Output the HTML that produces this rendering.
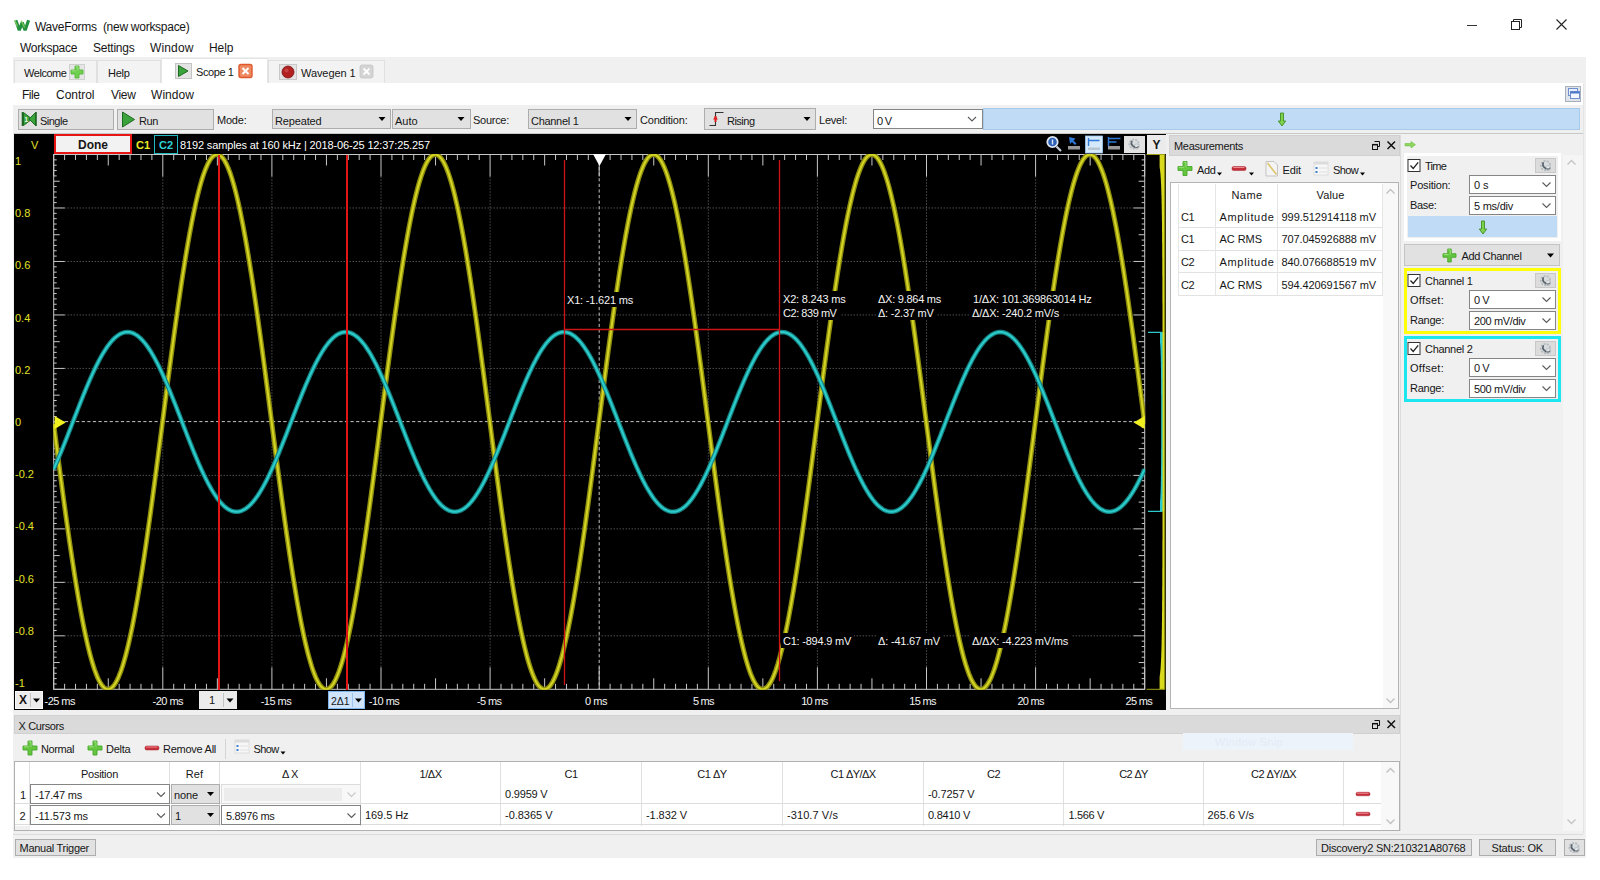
<!DOCTYPE html><html><head><meta charset="utf-8"><title>WaveForms (new workspace)</title><style>
html,body{margin:0;padding:0;}
body{width:1600px;height:880px;background:#fff;position:relative;overflow:hidden;font-family:"Liberation Sans",sans-serif;font-size:11px;color:#161616;}
.a{position:absolute;box-sizing:border-box;}
.t{position:absolute;white-space:nowrap;line-height:14px;height:14px;}
.t12{font-size:12px;}
.btn{position:absolute;box-sizing:border-box;background:#e1e1e1;border:1px solid #adadad;}
.cmb{position:absolute;box-sizing:border-box;background:#e1e1e1;border:1px solid #adadad;}
.edit{position:absolute;box-sizing:border-box;background:#fff;border:1px solid #858585;}
.w{color:#fff;}
svg{position:absolute;left:0;top:0;overflow:visible;}
</style></head><body>
<div class="t" style="left:35px;top:20px;font-size:12px;letter-spacing:-0.273px;">WaveForms&nbsp; (new workspace)</div>
<div class="t" style="left:20px;top:41px;font-size:12px;letter-spacing:-0.312px;">Workspace</div>
<div class="t" style="left:93px;top:41px;font-size:12px;letter-spacing:-0.232px;">Settings</div>
<div class="t" style="left:150px;top:41px;font-size:12px;letter-spacing:0.135px;">Window</div>
<div class="t" style="left:209px;top:41px;font-size:12px;letter-spacing:-0.047px;">Help</div>
<div class="a" style="left:13px;top:57px;width:1573px;height:801px;background:#f0f0f0;"></div>
<div class="a" style="left:14px;top:60px;width:83px;height:23px;background:#f3f3f3;border:1px solid #e0e0e0;border-bottom:none;"></div>
<div class="a" style="left:97px;top:60px;width:64px;height:23px;background:#f3f3f3;border:1px solid #e0e0e0;border-bottom:none;"></div>
<div class="a" style="left:161px;top:58px;width:107px;height:26px;background:#fff;border:1px solid #e4e4e4;border-bottom:none;"></div>
<div class="a" style="left:268px;top:60px;width:117px;height:23px;background:#f3f3f3;border:1px solid #e0e0e0;border-bottom:none;"></div>
<div class="t" style="left:24px;top:66px;letter-spacing:-0.451px;">Welcome</div>
<div class="t" style="left:108px;top:66px;letter-spacing:-0.281px;">Help</div>
<div class="t" style="left:196px;top:65px;letter-spacing:-0.411px;">Scope 1</div>
<div class="t" style="left:301px;top:66px;letter-spacing:-0.083px;">Wavegen 1</div>
<div class="a" style="left:69px;top:64px;width:16px;height:16px;background:#e6e6e6;border:1px solid #d0d0d0;"></div>
<div class="a" style="left:175px;top:63px;width:17px;height:16px;background:#e4e4e4;border:1px solid #c4c4c4;"></div>
<div class="a" style="left:279px;top:64px;width:18px;height:16px;background:#e4e4e4;border:1px solid #c8c8c8;"></div>
<div class="a" style="left:13px;top:83px;width:1570px;height:22px;background:#fff;"></div>
<div class="t" style="left:22px;top:88px;font-size:12px;letter-spacing:-0.461px;">File</div>
<div class="t" style="left:56px;top:88px;font-size:12px;letter-spacing:-0.027px;">Control</div>
<div class="t" style="left:111px;top:88px;font-size:12px;letter-spacing:-0.324px;">View</div>
<div class="t" style="left:151px;top:88px;font-size:12px;letter-spacing:0.052px;">Window</div>
<div class="a" style="left:1565px;top:86px;width:16px;height:16px;background:#dfe3ea;border:1px solid #a8b0bd;"></div>
<div class="btn" style="left:18px;top:109px;width:96px;height:21px;"></div>
<div class="btn" style="left:117px;top:109px;width:97px;height:21px;"></div>
<div class="t" style="left:40px;top:114px;letter-spacing:-0.513px;">Single</div>
<div class="t" style="left:139px;top:114px;letter-spacing:-0.396px;">Run</div>
<div class="t" style="left:217px;top:113px;letter-spacing:-0.216px;">Mode:</div>
<div class="cmb" style="left:272px;top:109px;width:119px;height:20px;"></div>
<div class="t" style="left:275px;top:114px;letter-spacing:-0.152px;">Repeated</div>
<div class="cmb" style="left:392px;top:109px;width:79px;height:20px;"></div>
<div class="t" style="left:395px;top:114px;letter-spacing:-0.035px;">Auto</div>
<div class="t" style="left:473px;top:113px;letter-spacing:-0.275px;">Source:</div>
<div class="cmb" style="left:528px;top:109px;width:109px;height:20px;"></div>
<div class="t" style="left:531px;top:114px;letter-spacing:-0.295px;">Channel 1</div>
<div class="t" style="left:640px;top:113px;letter-spacing:-0.205px;">Condition:</div>
<div class="cmb" style="left:704px;top:108px;width:112px;height:22px;"></div>
<div class="t" style="left:727px;top:114px;letter-spacing:-0.513px;">Rising</div>
<div class="t" style="left:819px;top:113px;letter-spacing:-0.227px;">Level:</div>
<div class="edit" style="left:873px;top:109px;width:110px;height:20px;"></div>
<div class="t" style="left:877px;top:114px;letter-spacing:-0.672px;">0 V</div>
<div class="a" style="left:983px;top:108px;width:597px;height:22px;background:#bfdbf5;border:1px solid #a9c9ea;"></div>
<div class="a" style="left:14px;top:133px;width:1569px;height:1px;background:#c8c8c8;"></div>
<div class="a" style="left:14px;top:134px;width:1152px;height:576px;background:#000;"></div>
<svg width="1600" height="880" viewBox="0 0 1600 880"><path d="M15.800 20.300L19.300 30.300L22.200 22.600L25.100 30.300L28.600 20.300" fill="none" stroke="#23903f" stroke-width="3.200" stroke-linejoin="miter" stroke-miterlimit="2.500"/><path d="M21.200 20.600L24.600 27.600M14.800 20.300L17.500 26.500" fill="none" stroke="#86cc5a" stroke-width="1.300" opacity="0.9"/><path d="M1467 25.5h10" stroke="#333" stroke-width="1"/><path d="M1513.5 21.5v-2h8v8h-2" fill="none" stroke="#222" stroke-width="1"/><rect x="1511.5" y="21.5" width="8" height="8" fill="none" stroke="#222" stroke-width="1"/><path d="M1556.5 19.5l10 10M1566.5 19.5l-10 10" stroke="#222" stroke-width="1.1"/><path d="M75.0 66h4v4.0h4.0v4h-4.0v4.0h-4v-4.0h-4.0v-4h4.0z" fill="#6fcf4f" stroke="#58b83c" stroke-width="0.9" stroke-linejoin="round"/><path d="M75.6 66.8h2.4v4.0M71.8 70.8h4.0" fill="none" stroke="#a8e88c" stroke-width="1" opacity="0.8"/><path d="M178.5 65.5l9.5 5.5l-9.5 5.5z" fill="#3ba33b" stroke="#1f6a22" stroke-width="1" stroke-linejoin="round"/><rect x="239" y="64.500" width="13" height="13" rx="2" fill="#ee8a62" stroke="#e0592e" stroke-width="1.4"/><path d="M242.500 68l6 6M248.500 68l-6 6" stroke="#fff" stroke-width="1.900"/><circle cx="288" cy="72" r="6" fill="#b32020" stroke="#7a1212" stroke-width="0.8"/><circle cx="286.5" cy="70.500" r="2" fill="#d25a5a" opacity="0.6"/><rect x="360" y="65" width="13" height="13" rx="2" fill="#d4d4d4" stroke="#c4c4c4" stroke-width="0.8"/><path d="M363.500 68.500l6 6M369.500 68.500l-6 6" stroke="#fff" stroke-width="1.8"/><rect x="1568.500" y="88.500" width="9" height="7" fill="#e8eefb" stroke="#6f8fd0"/><rect x="1570.500" y="91.500" width="9" height="7" fill="#f4f7ff" stroke="#6f8fd0"/><path d="M1570.500 92.500h9" stroke="#4f78c8" stroke-width="2"/><path d="M23.500 112.500l8.500 6.500l-8.500 6.500z" fill="#3ba33b" stroke="#1f6a22" stroke-width="1" stroke-linejoin="round"/><path d="M35.500 112.500l-6.500 6.500l6.500 6.500z" fill="#3ba33b" stroke="#1f6a22" stroke-width="1" stroke-linejoin="round"/><path d="M22.500 112v14M36 112v14" stroke="#1f6a22" stroke-width="1.6"/><text x="24.300" y="122" font-family="Liberation Sans, sans-serif" font-size="7" font-weight="bold" fill="#e4f4e4">1</text><path d="M122.500 112l12 7.500l-12 7.500z" fill="#3ba33b" stroke="#1f6a22" stroke-width="1" stroke-linejoin="round"/><path d="M378.5 117.0L385.5 117.0L382 121.0Z" fill="#000"/><path d="M457.5 117.0L464.5 117.0L461 121.0Z" fill="#000"/><path d="M624.5 117.0L631.5 117.0L628 121.0Z" fill="#000"/><path d="M803.5 117.0L810.5 117.0L807 121.0Z" fill="#000"/><path d="M709.500 125.500h6v-13h8" fill="none" stroke="#333" stroke-width="1.1"/><path d="M715.500 122v-6" stroke="#e02020" stroke-width="2"/><path d="M713 119.500l2.500-3.500l2.500 3.500z" fill="#e02020"/><path d="M968 117L972 121L976 117" fill="none" stroke="#5c5c5c" stroke-width="1.1"/><path d="M1280.5 113.0h3v8h2.2l-3.7 5l-3.7-5h2.2z" fill="#7fd04a" stroke="#3e8f25" stroke-width="0.9" stroke-linejoin="round"/></svg>
<svg width="1600" height="880" viewBox="0 0 1600 880"><path d="M162.80 176.5V667.3M271.90 176.5V667.3M381.00 176.5V667.3M490.10 176.5V667.3M708.30 176.5V667.3M817.40 176.5V667.3M926.50 176.5V667.3M1035.60 176.5V667.3M64.7 207.98H1133.7M64.7 261.46H1133.7M64.7 314.94H1133.7M64.7 368.42H1133.7M64.7 475.38H1133.7M64.7 528.86H1133.7M64.7 582.34H1133.7M64.7 635.82H1133.7" stroke="#767676" stroke-width="1" stroke-dasharray="1 2" fill="none"/><path d="M53.70 154.5v22M53.70 689.3v-22M64.61 154.5v5.5M64.61 689.3v-5.5M75.52 154.5v5.5M75.52 689.3v-5.5M86.43 154.5v5.5M86.43 689.3v-5.5M97.34 154.5v5.5M97.34 689.3v-5.5M108.25 154.5v11M108.25 689.3v-11M119.16 154.5v5.5M119.16 689.3v-5.5M130.07 154.5v5.5M130.07 689.3v-5.5M140.98 154.5v5.5M140.98 689.3v-5.5M151.89 154.5v5.5M151.89 689.3v-5.5M162.80 154.5v22M162.80 689.3v-22M173.71 154.5v5.5M173.71 689.3v-5.5M184.62 154.5v5.5M184.62 689.3v-5.5M195.53 154.5v5.5M195.53 689.3v-5.5M206.44 154.5v5.5M206.44 689.3v-5.5M217.35 154.5v11M217.35 689.3v-11M228.26 154.5v5.5M228.26 689.3v-5.5M239.17 154.5v5.5M239.17 689.3v-5.5M250.08 154.5v5.5M250.08 689.3v-5.5M260.99 154.5v5.5M260.99 689.3v-5.5M271.90 154.5v22M271.90 689.3v-22M282.81 154.5v5.5M282.81 689.3v-5.5M293.72 154.5v5.5M293.72 689.3v-5.5M304.63 154.5v5.5M304.63 689.3v-5.5M315.54 154.5v5.5M315.54 689.3v-5.5M326.45 154.5v11M326.45 689.3v-11M337.36 154.5v5.5M337.36 689.3v-5.5M348.27 154.5v5.5M348.27 689.3v-5.5M359.18 154.5v5.5M359.18 689.3v-5.5M370.09 154.5v5.5M370.09 689.3v-5.5M381.00 154.5v22M381.00 689.3v-22M391.91 154.5v5.5M391.91 689.3v-5.5M402.82 154.5v5.5M402.82 689.3v-5.5M413.73 154.5v5.5M413.73 689.3v-5.5M424.64 154.5v5.5M424.64 689.3v-5.5M435.55 154.5v11M435.55 689.3v-11M446.46 154.5v5.5M446.46 689.3v-5.5M457.37 154.5v5.5M457.37 689.3v-5.5M468.28 154.5v5.5M468.28 689.3v-5.5M479.19 154.5v5.5M479.19 689.3v-5.5M490.10 154.5v22M490.10 689.3v-22M501.01 154.5v5.5M501.01 689.3v-5.5M511.92 154.5v5.5M511.92 689.3v-5.5M522.83 154.5v5.5M522.83 689.3v-5.5M533.74 154.5v5.5M533.74 689.3v-5.5M544.65 154.5v11M544.65 689.3v-11M555.56 154.5v5.5M555.56 689.3v-5.5M566.47 154.5v5.5M566.47 689.3v-5.5M577.38 154.5v5.5M577.38 689.3v-5.5M588.29 154.5v5.5M588.29 689.3v-5.5M599.20 154.5v22M599.20 689.3v-22M610.11 154.5v5.5M610.11 689.3v-5.5M621.02 154.5v5.5M621.02 689.3v-5.5M631.93 154.5v5.5M631.93 689.3v-5.5M642.84 154.5v5.5M642.84 689.3v-5.5M653.75 154.5v11M653.75 689.3v-11M664.66 154.5v5.5M664.66 689.3v-5.5M675.57 154.5v5.5M675.57 689.3v-5.5M686.48 154.5v5.5M686.48 689.3v-5.5M697.39 154.5v5.5M697.39 689.3v-5.5M708.30 154.5v22M708.30 689.3v-22M719.21 154.5v5.5M719.21 689.3v-5.5M730.12 154.5v5.5M730.12 689.3v-5.5M741.03 154.5v5.5M741.03 689.3v-5.5M751.94 154.5v5.5M751.94 689.3v-5.5M762.85 154.5v11M762.85 689.3v-11M773.76 154.5v5.5M773.76 689.3v-5.5M784.67 154.5v5.5M784.67 689.3v-5.5M795.58 154.5v5.5M795.58 689.3v-5.5M806.49 154.5v5.5M806.49 689.3v-5.5M817.40 154.5v22M817.40 689.3v-22M828.31 154.5v5.5M828.31 689.3v-5.5M839.22 154.5v5.5M839.22 689.3v-5.5M850.13 154.5v5.5M850.13 689.3v-5.5M861.04 154.5v5.5M861.04 689.3v-5.5M871.95 154.5v11M871.95 689.3v-11M882.86 154.5v5.5M882.86 689.3v-5.5M893.77 154.5v5.5M893.77 689.3v-5.5M904.68 154.5v5.5M904.68 689.3v-5.5M915.59 154.5v5.5M915.59 689.3v-5.5M926.50 154.5v22M926.50 689.3v-22M937.41 154.5v5.5M937.41 689.3v-5.5M948.32 154.5v5.5M948.32 689.3v-5.5M959.23 154.5v5.5M959.23 689.3v-5.5M970.14 154.5v5.5M970.14 689.3v-5.5M981.05 154.5v11M981.05 689.3v-11M991.96 154.5v5.5M991.96 689.3v-5.5M1002.87 154.5v5.5M1002.87 689.3v-5.5M1013.78 154.5v5.5M1013.78 689.3v-5.5M1024.69 154.5v5.5M1024.69 689.3v-5.5M1035.60 154.5v22M1035.60 689.3v-22M1046.51 154.5v5.5M1046.51 689.3v-5.5M1057.42 154.5v5.5M1057.42 689.3v-5.5M1068.33 154.5v5.5M1068.33 689.3v-5.5M1079.24 154.5v5.5M1079.24 689.3v-5.5M1090.15 154.5v11M1090.15 689.3v-11M1101.06 154.5v5.5M1101.06 689.3v-5.5M1111.97 154.5v5.5M1111.97 689.3v-5.5M1122.88 154.5v5.5M1122.88 689.3v-5.5M1133.79 154.5v5.5M1133.79 689.3v-5.5M1144.70 154.5v22M1144.70 689.3v-22M53.7 154.50h11M1144.7 154.50h-11M53.7 159.85h3M1144.7 159.85h-3M53.7 165.20h3M1144.7 165.20h-3M53.7 170.54h3M1144.7 170.54h-3M53.7 175.89h3M1144.7 175.89h-3M53.7 181.24h6M1144.7 181.24h-6M53.7 186.59h3M1144.7 186.59h-3M53.7 191.94h3M1144.7 191.94h-3M53.7 197.28h3M1144.7 197.28h-3M53.7 202.63h3M1144.7 202.63h-3M53.7 207.98h11M1144.7 207.98h-11M53.7 213.33h3M1144.7 213.33h-3M53.7 218.68h3M1144.7 218.68h-3M53.7 224.02h3M1144.7 224.02h-3M53.7 229.37h3M1144.7 229.37h-3M53.7 234.72h6M1144.7 234.72h-6M53.7 240.07h3M1144.7 240.07h-3M53.7 245.42h3M1144.7 245.42h-3M53.7 250.76h3M1144.7 250.76h-3M53.7 256.11h3M1144.7 256.11h-3M53.7 261.46h11M1144.7 261.46h-11M53.7 266.81h3M1144.7 266.81h-3M53.7 272.16h3M1144.7 272.16h-3M53.7 277.50h3M1144.7 277.50h-3M53.7 282.85h3M1144.7 282.85h-3M53.7 288.20h6M1144.7 288.20h-6M53.7 293.55h3M1144.7 293.55h-3M53.7 298.90h3M1144.7 298.90h-3M53.7 304.24h3M1144.7 304.24h-3M53.7 309.59h3M1144.7 309.59h-3M53.7 314.94h11M1144.7 314.94h-11M53.7 320.29h3M1144.7 320.29h-3M53.7 325.64h3M1144.7 325.64h-3M53.7 330.98h3M1144.7 330.98h-3M53.7 336.33h3M1144.7 336.33h-3M53.7 341.68h6M1144.7 341.68h-6M53.7 347.03h3M1144.7 347.03h-3M53.7 352.38h3M1144.7 352.38h-3M53.7 357.72h3M1144.7 357.72h-3M53.7 363.07h3M1144.7 363.07h-3M53.7 368.42h11M1144.7 368.42h-11M53.7 373.77h3M1144.7 373.77h-3M53.7 379.12h3M1144.7 379.12h-3M53.7 384.46h3M1144.7 384.46h-3M53.7 389.81h3M1144.7 389.81h-3M53.7 395.16h6M1144.7 395.16h-6M53.7 400.51h3M1144.7 400.51h-3M53.7 405.86h3M1144.7 405.86h-3M53.7 411.20h3M1144.7 411.20h-3M53.7 416.55h3M1144.7 416.55h-3M53.7 421.90h11M1144.7 421.90h-11M53.7 427.25h3M1144.7 427.25h-3M53.7 432.60h3M1144.7 432.60h-3M53.7 437.94h3M1144.7 437.94h-3M53.7 443.29h3M1144.7 443.29h-3M53.7 448.64h6M1144.7 448.64h-6M53.7 453.99h3M1144.7 453.99h-3M53.7 459.34h3M1144.7 459.34h-3M53.7 464.68h3M1144.7 464.68h-3M53.7 470.03h3M1144.7 470.03h-3M53.7 475.38h11M1144.7 475.38h-11M53.7 480.73h3M1144.7 480.73h-3M53.7 486.08h3M1144.7 486.08h-3M53.7 491.42h3M1144.7 491.42h-3M53.7 496.77h3M1144.7 496.77h-3M53.7 502.12h6M1144.7 502.12h-6M53.7 507.47h3M1144.7 507.47h-3M53.7 512.82h3M1144.7 512.82h-3M53.7 518.16h3M1144.7 518.16h-3M53.7 523.51h3M1144.7 523.51h-3M53.7 528.86h11M1144.7 528.86h-11M53.7 534.21h3M1144.7 534.21h-3M53.7 539.56h3M1144.7 539.56h-3M53.7 544.90h3M1144.7 544.90h-3M53.7 550.25h3M1144.7 550.25h-3M53.7 555.60h6M1144.7 555.60h-6M53.7 560.95h3M1144.7 560.95h-3M53.7 566.30h3M1144.7 566.30h-3M53.7 571.64h3M1144.7 571.64h-3M53.7 576.99h3M1144.7 576.99h-3M53.7 582.34h11M1144.7 582.34h-11M53.7 587.69h3M1144.7 587.69h-3M53.7 593.04h3M1144.7 593.04h-3M53.7 598.38h3M1144.7 598.38h-3M53.7 603.73h3M1144.7 603.73h-3M53.7 609.08h6M1144.7 609.08h-6M53.7 614.43h3M1144.7 614.43h-3M53.7 619.78h3M1144.7 619.78h-3M53.7 625.12h3M1144.7 625.12h-3M53.7 630.47h3M1144.7 630.47h-3M53.7 635.82h11M1144.7 635.82h-11M53.7 641.17h3M1144.7 641.17h-3M53.7 646.52h3M1144.7 646.52h-3M53.7 651.86h3M1144.7 651.86h-3M53.7 657.21h3M1144.7 657.21h-3M53.7 662.56h6M1144.7 662.56h-6M53.7 667.91h3M1144.7 667.91h-3M53.7 673.26h3M1144.7 673.26h-3M53.7 678.60h3M1144.7 678.60h-3M53.7 683.95h3M1144.7 683.95h-3M53.7 689.30h11M1144.7 689.30h-11" stroke="#c8c8c8" stroke-width="1" fill="none"/><rect x="53.7" y="154.5" width="1091.0" height="534.8" fill="none" stroke="#c8c8c8" stroke-width="1"/><path d="M53.7 421.6H1144.7M599.20 167V689.3" stroke="#c4c4c4" stroke-width="1" stroke-dasharray="3.2 2.4" fill="none"/><clipPath id="pc"><rect x="53.2" y="154" width="1092" height="535.800"/></clipPath><g clip-path="url(#pc)" fill="none" stroke-linejoin="round"><path d="M53.7 423.9L54.7 431.6L55.7 439.3L56.7 447.0L57.7 454.6L58.7 462.3L59.7 469.9L60.7 477.4L61.7 484.9L62.7 492.4L63.7 499.8L64.7 507.1L65.7 514.4L66.7 521.6L67.7 528.7L68.7 535.7L69.7 542.6L70.7 549.4L71.7 556.1L72.7 562.7L73.7 569.2L74.7 575.6L75.7 581.8L76.7 587.9L77.7 593.9L78.7 599.7L79.7 605.4L80.7 610.9L81.7 616.3L82.7 621.5L83.7 626.5L84.7 631.4L85.7 636.1L86.7 640.6L87.7 645.0L88.7 649.1L89.7 653.1L90.7 656.8L91.7 660.4L92.7 663.8L93.7 667.0L94.7 670.0L95.7 672.7L96.7 675.3L97.7 677.7L98.7 679.8L99.7 681.7L100.7 683.4L101.7 684.9L102.7 686.2L103.7 687.3L104.7 688.1L105.7 688.7L106.7 689.1L107.7 689.3L108.7 689.2L109.7 689.0L110.7 688.5L111.7 687.8L112.7 686.8L113.7 685.7L114.7 684.3L115.7 682.7L116.7 680.9L117.7 678.9L118.7 676.7L119.7 674.2L120.7 671.6L121.7 668.7L122.7 665.7L123.7 662.4L124.7 658.9L125.7 655.3L126.7 651.4L127.7 647.4L128.7 643.1L129.7 638.7L130.7 634.1L131.7 629.4L132.7 624.4L133.7 619.3L134.7 614.0L135.7 608.6L136.7 603.0L137.7 597.3L138.7 591.4L139.7 585.3L140.7 579.2L141.7 572.9L142.7 566.5L143.7 559.9L144.7 553.3L145.7 546.5L146.7 539.7L147.7 532.7L148.7 525.7L149.7 518.5L150.7 511.3L151.7 504.0L152.7 496.6L153.7 489.2L154.7 481.7L155.7 474.2L156.7 466.6L157.7 459.0L158.7 451.4L159.7 443.7L160.7 436.0L161.7 428.4L162.7 420.7L163.7 413.0L164.7 405.3L165.7 397.6L166.7 389.9L167.7 382.3L168.7 374.7L169.7 367.1L170.7 359.6L171.7 352.2L172.7 344.8L173.7 337.4L174.7 330.2L175.7 323.0L176.7 315.9L177.7 308.8L178.7 301.9L179.7 295.1L180.7 288.3L181.7 281.7L182.7 275.2L183.7 268.9L184.7 262.6L185.7 256.5L186.7 250.5L187.7 244.7L188.7 239.0L189.7 233.4L190.7 228.1L191.7 222.8L192.7 217.8L193.7 212.9L194.7 208.2L195.7 203.6L196.7 199.3L197.7 195.1L198.7 191.1L199.7 187.3L200.7 183.7L201.7 180.3L202.7 177.1L203.7 174.1L204.7 171.3L205.7 168.7L206.7 166.4L207.7 164.2L208.7 162.3L209.7 160.5L210.7 159.0L211.7 157.7L212.7 156.6L213.7 155.8L214.7 155.1L215.7 154.7L216.7 154.5L217.7 154.5L218.7 154.8L219.7 155.3L220.7 155.9L221.7 156.9L222.7 158.0L223.7 159.3L224.7 160.9L225.7 162.7L226.7 164.7L227.7 166.9L228.7 169.3L229.7 171.9L230.7 174.8L231.7 177.8L232.7 181.1L233.7 184.5L234.7 188.2L235.7 192.0L236.7 196.0L237.7 200.2L238.7 204.6L239.7 209.2L240.7 214.0L241.7 218.9L242.7 224.0L243.7 229.2L244.7 234.7L245.7 240.2L246.7 246.0L247.7 251.8L248.7 257.8L249.7 264.0L250.7 270.3L251.7 276.7L252.7 283.2L253.7 289.8L254.7 296.6L255.7 303.4L256.7 310.4L257.7 317.4L258.7 324.6L259.7 331.8L260.7 339.1L261.7 346.4L262.7 353.8L263.7 361.3L264.7 368.8L265.7 376.4L266.7 384.0L267.7 391.6L268.7 399.3L269.7 407.0L270.7 414.7L271.7 422.4L272.7 430.1L273.7 437.8L274.7 445.4L275.7 453.1L276.7 460.7L277.7 468.3L278.7 475.9L279.7 483.4L280.7 490.9L281.7 498.3L282.7 505.6L283.7 512.9L284.7 520.1L285.7 527.2L286.7 534.3L287.7 541.2L288.7 548.1L289.7 554.8L290.7 561.4L291.7 567.9L292.7 574.3L293.7 580.6L294.7 586.7L295.7 592.7L296.7 598.6L297.7 604.3L298.7 609.8L299.7 615.2L300.7 620.5L301.7 625.5L302.7 630.4L303.7 635.2L304.7 639.7L305.7 644.1L306.7 648.3L307.7 652.3L308.7 656.1L309.7 659.7L310.7 663.1L311.7 666.4L312.7 669.4L313.7 672.2L314.7 674.8L315.7 677.2L316.7 679.4L317.7 681.4L318.7 683.1L319.7 684.6L320.7 686.0L321.7 687.1L322.7 688.0L323.7 688.6L324.7 689.1L325.7 689.3L326.7 689.3L327.7 689.0L328.7 688.6L329.7 687.9L330.7 687.0L331.7 685.9L332.7 684.6L333.7 683.1L334.7 681.3L335.7 679.3L336.7 677.1L337.7 674.7L338.7 672.1L339.7 669.3L340.7 666.3L341.7 663.1L342.7 659.6L343.7 656.0L344.7 652.2L345.7 648.2L346.7 644.0L347.7 639.6L348.7 635.1L349.7 630.3L350.7 625.4L351.7 620.3L352.7 615.1L353.7 609.7L354.7 604.1L355.7 598.4L356.7 592.6L357.7 586.6L358.7 580.4L359.7 574.2L360.7 567.8L361.7 561.3L362.7 554.6L363.7 547.9L364.7 541.0L365.7 534.1L366.7 527.1L367.7 520.0L368.7 512.7L369.7 505.5L370.7 498.1L371.7 490.7L372.7 483.2L373.7 475.7L374.7 468.2L375.7 460.6L376.7 452.9L377.7 445.3L378.7 437.6L379.7 429.9L380.7 422.2L381.7 414.5L382.7 406.8L383.7 399.1L384.7 391.5L385.7 383.8L386.7 376.2L387.7 368.7L388.7 361.1L389.7 353.7L390.7 346.2L391.7 338.9L392.7 331.6L393.7 324.4L394.7 317.3L395.7 310.2L396.7 303.3L397.7 296.4L398.7 289.7L399.7 283.0L400.7 276.5L401.7 270.1L402.7 263.8L403.7 257.7L404.7 251.7L405.7 245.8L406.7 240.1L407.7 234.5L408.7 229.1L409.7 223.9L410.7 218.8L411.7 213.8L412.7 209.1L413.7 204.5L414.7 200.1L415.7 195.9L416.7 191.9L417.7 188.1L418.7 184.4L419.7 181.0L420.7 177.7L421.7 174.7L422.7 171.9L423.7 169.2L424.7 166.8L425.7 164.6L426.7 162.6L427.7 160.9L428.7 159.3L429.7 158.0L430.7 156.8L431.7 155.9L432.7 155.2L433.7 154.8L434.7 154.5L435.7 154.5L436.7 154.7L437.7 155.1L438.7 155.8L439.7 156.7L440.7 157.7L441.7 159.0L442.7 160.6L443.7 162.3L444.7 164.3L445.7 166.4L446.7 168.8L447.7 171.4L448.7 174.2L449.7 177.2L450.7 180.4L451.7 183.8L452.7 187.4L453.7 191.2L454.7 195.2L455.7 199.4L456.7 203.7L457.7 208.3L458.7 213.0L459.7 217.9L460.7 223.0L461.7 228.2L462.7 233.6L463.7 239.1L464.7 244.8L465.7 250.6L466.7 256.6L467.7 262.8L468.7 269.0L469.7 275.4L470.7 281.9L471.7 288.5L472.7 295.2L473.7 302.1L474.7 309.0L475.7 316.0L476.7 323.1L477.7 330.3L478.7 337.6L479.7 344.9L480.7 352.3L481.7 359.8L482.7 367.3L483.7 374.9L484.7 382.5L485.7 390.1L486.7 397.8L487.7 405.4L488.7 413.1L489.7 420.8L490.7 428.5L491.7 436.2L492.7 443.9L493.7 451.6L494.7 459.2L495.7 466.8L496.7 474.4L497.7 481.9L498.7 489.4L499.7 496.8L500.7 504.2L501.7 511.5L502.7 518.7L503.7 525.8L504.7 532.9L505.7 539.8L506.7 546.7L507.7 553.5L508.7 560.1L509.7 566.6L510.7 573.0L511.7 579.3L512.7 585.5L513.7 591.5L514.7 597.4L515.7 603.1L516.7 608.7L517.7 614.1L518.7 619.4L519.7 624.5L520.7 629.5L521.7 634.2L522.7 638.8L523.7 643.2L524.7 647.5L525.7 651.5L526.7 655.4L527.7 659.0L528.7 662.5L529.7 665.7L530.7 668.8L531.7 671.7L532.7 674.3L533.7 676.7L534.7 679.0L535.7 681.0L536.7 682.8L537.7 684.4L538.7 685.7L539.7 686.9L540.7 687.8L541.7 688.5L542.7 689.0L543.7 689.2L544.7 689.3L545.7 689.1L546.7 688.7L547.7 688.1L548.7 687.2L549.7 686.2L550.7 684.9L551.7 683.4L552.7 681.7L553.7 679.7L554.7 677.6L555.7 675.2L556.7 672.7L557.7 669.9L558.7 666.9L559.7 663.7L560.7 660.3L561.7 656.8L562.7 653.0L563.7 649.0L564.7 644.9L565.7 640.5L566.7 636.0L567.7 631.3L568.7 626.4L569.7 621.4L570.7 616.2L571.7 610.8L572.7 605.3L573.7 599.6L574.7 593.7L575.7 587.8L576.7 581.7L577.7 575.4L578.7 569.1L579.7 562.6L580.7 556.0L581.7 549.2L582.7 542.4L583.7 535.5L584.7 528.5L585.7 521.4L586.7 514.2L587.7 506.9L588.7 499.6L589.7 492.2L590.7 484.7L591.7 477.2L592.7 469.7L593.7 462.1L594.7 454.5L595.7 446.8L596.7 439.1L597.7 431.4L598.7 423.7L599.7 416.0L600.7 408.3L601.7 400.7L602.7 393.0L603.7 385.3L604.7 377.7L605.7 370.2L606.7 362.6L607.7 355.1L608.7 347.7L609.7 340.4L610.7 333.1L611.7 325.8L612.7 318.7L613.7 311.6L614.7 304.7L615.7 297.8L616.7 291.0L617.7 284.4L618.7 277.8L619.7 271.4L620.7 265.1L621.7 258.9L622.7 252.9L623.7 247.0L624.7 241.2L625.7 235.6L626.7 230.2L627.7 224.9L628.7 219.8L629.7 214.8L630.7 210.0L631.7 205.4L632.7 201.0L633.7 196.7L634.7 192.7L635.7 188.8L636.7 185.1L637.7 181.7L638.7 178.4L639.7 175.3L640.7 172.4L641.7 169.8L642.7 167.3L643.7 165.1L644.7 163.0L645.7 161.2L646.7 159.6L647.7 158.2L648.7 157.0L649.7 156.1L650.7 155.4L651.7 154.9L652.7 154.6L653.7 154.5L654.7 154.7L655.7 155.0L656.7 155.6L657.7 156.5L658.7 157.5L659.7 158.8L660.7 160.2L661.7 161.9L662.7 163.9L663.7 166.0L664.7 168.3L665.7 170.9L666.7 173.6L667.7 176.6L668.7 179.7L669.7 183.1L670.7 186.7L671.7 190.4L672.7 194.4L673.7 198.5L674.7 202.8L675.7 207.4L676.7 212.0L677.7 216.9L678.7 221.9L679.7 227.1L680.7 232.5L681.7 238.0L682.7 243.7L683.7 249.5L684.7 255.4L685.7 261.5L686.7 267.7L687.7 274.1L688.7 280.6L689.7 287.2L690.7 293.9L691.7 300.7L692.7 307.6L693.7 314.6L694.7 321.7L695.7 328.9L696.7 336.1L697.7 343.5L698.7 350.9L699.7 358.3L700.7 365.8L701.7 373.4L702.7 381.0L703.7 388.6L704.7 396.2L705.7 403.9L706.7 411.6L707.7 419.3L708.7 427.0L709.7 434.7L710.7 442.4L711.7 450.0L712.7 457.7L713.7 465.3L714.7 472.9L715.7 480.4L716.7 487.9L717.7 495.3L718.7 502.7L719.7 510.0L720.7 517.2L721.7 524.4L722.7 531.5L723.7 538.4L724.7 545.3L725.7 552.1L726.7 558.8L727.7 565.3L728.7 571.8L729.7 578.1L730.7 584.3L731.7 590.3L732.7 596.2L733.7 602.0L734.7 607.6L735.7 613.1L736.7 618.4L737.7 623.5L738.7 628.5L739.7 633.3L740.7 637.9L741.7 642.4L742.7 646.6L743.7 650.7L744.7 654.6L745.7 658.3L746.7 661.8L747.7 665.1L748.7 668.2L749.7 671.1L750.7 673.8L751.7 676.3L752.7 678.5L753.7 680.6L754.7 682.4L755.7 684.1L756.7 685.5L757.7 686.7L758.7 687.6L759.7 688.4L760.7 688.9L761.7 689.2L762.7 689.3L763.7 689.2L764.7 688.8L765.7 688.2L766.7 687.4L767.7 686.4L768.7 685.2L769.7 683.7L770.7 682.0L771.7 680.1L772.7 678.0L773.7 675.7L774.7 673.2L775.7 670.5L776.7 667.5L777.7 664.4L778.7 661.0L779.7 657.5L780.7 653.7L781.7 649.8L782.7 645.7L783.7 641.4L784.7 636.9L785.7 632.2L786.7 627.4L787.7 622.4L788.7 617.2L789.7 611.9L790.7 606.4L791.7 600.7L792.7 594.9L793.7 589.0L794.7 582.9L795.7 576.7L796.7 570.3L797.7 563.9L798.7 557.3L799.7 550.6L800.7 543.8L801.7 536.9L802.7 529.9L803.7 522.8L804.7 515.6L805.7 508.4L806.7 501.1L807.7 493.7L808.7 486.2L809.7 478.7L810.7 471.2L811.7 463.6L812.7 456.0L813.7 448.3L814.7 440.7L815.7 433.0L816.7 425.3L817.7 417.6L818.7 409.9L819.7 402.2L820.7 394.5L821.7 386.9L822.7 379.3L823.7 371.7L824.7 364.1L825.7 356.6L826.7 349.2L827.7 341.8L828.7 334.5L829.7 327.3L830.7 320.1L831.7 313.0L832.7 306.0L833.7 299.2L834.7 292.4L835.7 285.7L836.7 279.1L837.7 272.7L838.7 266.3L839.7 260.1L840.7 254.1L841.7 248.2L842.7 242.4L843.7 236.7L844.7 231.3L845.7 225.9L846.7 220.8L847.7 215.8L848.7 211.0L849.7 206.3L850.7 201.9L851.7 197.6L852.7 193.5L853.7 189.6L854.7 185.9L855.7 182.3L856.7 179.0L857.7 175.9L858.7 173.0L859.7 170.3L860.7 167.8L861.7 165.5L862.7 163.4L863.7 161.5L864.7 159.9L865.7 158.5L866.7 157.3L867.7 156.3L868.7 155.5L869.7 154.9L870.7 154.6L871.7 154.5L872.7 154.6L873.7 154.9L874.7 155.5L875.7 156.3L876.7 157.3L877.7 158.5L878.7 159.9L879.7 161.6L880.7 163.5L881.7 165.5L882.7 167.8L883.7 170.3L884.7 173.1L885.7 176.0L886.7 179.1L887.7 182.4L888.7 185.9L889.7 189.7L890.7 193.6L891.7 197.7L892.7 202.0L893.7 206.4L894.7 211.1L895.7 215.9L896.7 220.9L897.7 226.1L898.7 231.4L899.7 236.9L900.7 242.5L901.7 248.3L902.7 254.2L903.7 260.3L904.7 266.5L905.7 272.8L906.7 279.3L907.7 285.8L908.7 292.5L909.7 299.3L910.7 306.2L911.7 313.2L912.7 320.3L913.7 327.4L914.7 334.7L915.7 342.0L916.7 349.4L917.7 356.8L918.7 364.3L919.7 371.9L920.7 379.4L921.7 387.1L922.7 394.7L923.7 402.4L924.7 410.1L925.7 417.8L926.7 425.5L927.7 433.2L928.7 440.8L929.7 448.5L930.7 456.2L931.7 463.8L932.7 471.4L933.7 478.9L934.7 486.4L935.7 493.9L936.7 501.2L937.7 508.6L938.7 515.8L939.7 523.0L940.7 530.1L941.7 537.1L942.7 544.0L943.7 550.8L944.7 557.5L945.7 564.0L946.7 570.5L947.7 576.8L948.7 583.0L949.7 589.1L950.7 595.1L951.7 600.9L952.7 606.5L953.7 612.0L954.7 617.3L955.7 622.5L956.7 627.5L957.7 632.3L958.7 637.0L959.7 641.5L960.7 645.8L961.7 649.9L962.7 653.8L963.7 657.6L964.7 661.1L965.7 664.5L966.7 667.6L967.7 670.5L968.7 673.3L969.7 675.8L970.7 678.1L971.7 680.2L972.7 682.1L973.7 683.7L974.7 685.2L975.7 686.4L976.7 687.4L977.7 688.2L978.7 688.8L979.7 689.2L980.7 689.3L981.7 689.2L982.7 688.9L983.7 688.4L984.7 687.6L985.7 686.6L986.7 685.4L987.7 684.0L988.7 682.4L989.7 680.5L990.7 678.5L991.7 676.2L992.7 673.7L993.7 671.0L994.7 668.1L995.7 665.0L996.7 661.7L997.7 658.2L998.7 654.5L999.7 650.6L1000.7 646.5L1001.7 642.3L1002.7 637.8L1003.7 633.2L1004.7 628.4L1005.7 623.4L1006.7 618.3L1007.7 612.9L1008.7 607.5L1009.7 601.9L1010.7 596.1L1011.7 590.2L1012.7 584.1L1013.7 577.9L1014.7 571.6L1015.7 565.2L1016.7 558.6L1017.7 551.9L1018.7 545.2L1019.7 538.3L1020.7 531.3L1021.7 524.2L1022.7 517.1L1023.7 509.8L1024.7 502.5L1025.7 495.2L1026.7 487.7L1027.7 480.2L1028.7 472.7L1029.7 465.1L1030.7 457.5L1031.7 449.9L1032.7 442.2L1033.7 434.5L1034.7 426.8L1035.7 419.1L1036.7 411.4L1037.7 403.7L1038.7 396.1L1039.7 388.4L1040.7 380.8L1041.7 373.2L1042.7 365.6L1043.7 358.1L1044.7 350.7L1045.7 343.3L1046.7 336.0L1047.7 328.7L1048.7 321.5L1049.7 314.4L1050.7 307.4L1051.7 300.5L1052.7 293.7L1053.7 287.0L1054.7 280.4L1055.7 273.9L1056.7 267.6L1057.7 261.4L1058.7 255.3L1059.7 249.3L1060.7 243.5L1061.7 237.9L1062.7 232.3L1063.7 227.0L1064.7 221.8L1065.7 216.8L1066.7 211.9L1067.7 207.2L1068.7 202.7L1069.7 198.4L1070.7 194.3L1071.7 190.3L1072.7 186.6L1073.7 183.0L1074.7 179.7L1075.7 176.5L1076.7 173.6L1077.7 170.8L1078.7 168.3L1079.7 165.9L1080.7 163.8L1081.7 161.9L1082.7 160.2L1083.7 158.7L1084.7 157.5L1085.7 156.4L1086.7 155.6L1087.7 155.0L1088.7 154.7L1089.7 154.5L1090.7 154.6L1091.7 154.9L1092.7 155.4L1093.7 156.1L1094.7 157.1L1095.7 158.2L1096.7 159.6L1097.7 161.2L1098.7 163.1L1099.7 165.1L1100.7 167.4L1101.7 169.8L1102.7 172.5L1103.7 175.4L1104.7 178.5L1105.7 181.7L1106.7 185.2L1107.7 188.9L1108.7 192.8L1109.7 196.8L1110.7 201.1L1111.7 205.5L1112.7 210.1L1113.7 214.9L1114.7 219.9L1115.7 225.0L1116.7 230.3L1117.7 235.8L1118.7 241.4L1119.7 247.1L1120.7 253.0L1121.7 259.1L1122.7 265.2L1123.7 271.5L1124.7 278.0L1125.7 284.5L1126.7 291.2L1127.7 297.9L1128.7 304.8L1129.7 311.8L1130.7 318.9L1131.7 326.0L1132.7 333.2L1133.7 340.5L1134.7 347.9L1135.7 355.3L1136.7 362.8L1137.7 370.3L1138.7 377.9L1139.7 385.5L1140.7 393.2L1141.7 400.8L1142.7 408.5L1143.7 416.2L1144.7 423.9" stroke="#8e8e0e" stroke-width="4.900"/><path d="M53.7 423.9L54.7 431.6L55.7 439.3L56.7 447.0L57.7 454.6L58.7 462.3L59.7 469.9L60.7 477.4L61.7 484.9L62.7 492.4L63.7 499.8L64.7 507.1L65.7 514.4L66.7 521.6L67.7 528.7L68.7 535.7L69.7 542.6L70.7 549.4L71.7 556.1L72.7 562.7L73.7 569.2L74.7 575.6L75.7 581.8L76.7 587.9L77.7 593.9L78.7 599.7L79.7 605.4L80.7 610.9L81.7 616.3L82.7 621.5L83.7 626.5L84.7 631.4L85.7 636.1L86.7 640.6L87.7 645.0L88.7 649.1L89.7 653.1L90.7 656.8L91.7 660.4L92.7 663.8L93.7 667.0L94.7 670.0L95.7 672.7L96.7 675.3L97.7 677.7L98.7 679.8L99.7 681.7L100.7 683.4L101.7 684.9L102.7 686.2L103.7 687.3L104.7 688.1L105.7 688.7L106.7 689.1L107.7 689.3L108.7 689.2L109.7 689.0L110.7 688.5L111.7 687.8L112.7 686.8L113.7 685.7L114.7 684.3L115.7 682.7L116.7 680.9L117.7 678.9L118.7 676.7L119.7 674.2L120.7 671.6L121.7 668.7L122.7 665.7L123.7 662.4L124.7 658.9L125.7 655.3L126.7 651.4L127.7 647.4L128.7 643.1L129.7 638.7L130.7 634.1L131.7 629.4L132.7 624.4L133.7 619.3L134.7 614.0L135.7 608.6L136.7 603.0L137.7 597.3L138.7 591.4L139.7 585.3L140.7 579.2L141.7 572.9L142.7 566.5L143.7 559.9L144.7 553.3L145.7 546.5L146.7 539.7L147.7 532.7L148.7 525.7L149.7 518.5L150.7 511.3L151.7 504.0L152.7 496.6L153.7 489.2L154.7 481.7L155.7 474.2L156.7 466.6L157.7 459.0L158.7 451.4L159.7 443.7L160.7 436.0L161.7 428.4L162.7 420.7L163.7 413.0L164.7 405.3L165.7 397.6L166.7 389.9L167.7 382.3L168.7 374.7L169.7 367.1L170.7 359.6L171.7 352.2L172.7 344.8L173.7 337.4L174.7 330.2L175.7 323.0L176.7 315.9L177.7 308.8L178.7 301.9L179.7 295.1L180.7 288.3L181.7 281.7L182.7 275.2L183.7 268.9L184.7 262.6L185.7 256.5L186.7 250.5L187.7 244.7L188.7 239.0L189.7 233.4L190.7 228.1L191.7 222.8L192.7 217.8L193.7 212.9L194.7 208.2L195.7 203.6L196.7 199.3L197.7 195.1L198.7 191.1L199.7 187.3L200.7 183.7L201.7 180.3L202.7 177.1L203.7 174.1L204.7 171.3L205.7 168.7L206.7 166.4L207.7 164.2L208.7 162.3L209.7 160.5L210.7 159.0L211.7 157.7L212.7 156.6L213.7 155.8L214.7 155.1L215.7 154.7L216.7 154.5L217.7 154.5L218.7 154.8L219.7 155.3L220.7 155.9L221.7 156.9L222.7 158.0L223.7 159.3L224.7 160.9L225.7 162.7L226.7 164.7L227.7 166.9L228.7 169.3L229.7 171.9L230.7 174.8L231.7 177.8L232.7 181.1L233.7 184.5L234.7 188.2L235.7 192.0L236.7 196.0L237.7 200.2L238.7 204.6L239.7 209.2L240.7 214.0L241.7 218.9L242.7 224.0L243.7 229.2L244.7 234.7L245.7 240.2L246.7 246.0L247.7 251.8L248.7 257.8L249.7 264.0L250.7 270.3L251.7 276.7L252.7 283.2L253.7 289.8L254.7 296.6L255.7 303.4L256.7 310.4L257.7 317.4L258.7 324.6L259.7 331.8L260.7 339.1L261.7 346.4L262.7 353.8L263.7 361.3L264.7 368.8L265.7 376.4L266.7 384.0L267.7 391.6L268.7 399.3L269.7 407.0L270.7 414.7L271.7 422.4L272.7 430.1L273.7 437.8L274.7 445.4L275.7 453.1L276.7 460.7L277.7 468.3L278.7 475.9L279.7 483.4L280.7 490.9L281.7 498.3L282.7 505.6L283.7 512.9L284.7 520.1L285.7 527.2L286.7 534.3L287.7 541.2L288.7 548.1L289.7 554.8L290.7 561.4L291.7 567.9L292.7 574.3L293.7 580.6L294.7 586.7L295.7 592.7L296.7 598.6L297.7 604.3L298.7 609.8L299.7 615.2L300.7 620.5L301.7 625.5L302.7 630.4L303.7 635.2L304.7 639.7L305.7 644.1L306.7 648.3L307.7 652.3L308.7 656.1L309.7 659.7L310.7 663.1L311.7 666.4L312.7 669.4L313.7 672.2L314.7 674.8L315.7 677.2L316.7 679.4L317.7 681.4L318.7 683.1L319.7 684.6L320.7 686.0L321.7 687.1L322.7 688.0L323.7 688.6L324.7 689.1L325.7 689.3L326.7 689.3L327.7 689.0L328.7 688.6L329.7 687.9L330.7 687.0L331.7 685.9L332.7 684.6L333.7 683.1L334.7 681.3L335.7 679.3L336.7 677.1L337.7 674.7L338.7 672.1L339.7 669.3L340.7 666.3L341.7 663.1L342.7 659.6L343.7 656.0L344.7 652.2L345.7 648.2L346.7 644.0L347.7 639.6L348.7 635.1L349.7 630.3L350.7 625.4L351.7 620.3L352.7 615.1L353.7 609.7L354.7 604.1L355.7 598.4L356.7 592.6L357.7 586.6L358.7 580.4L359.7 574.2L360.7 567.8L361.7 561.3L362.7 554.6L363.7 547.9L364.7 541.0L365.7 534.1L366.7 527.1L367.7 520.0L368.7 512.7L369.7 505.5L370.7 498.1L371.7 490.7L372.7 483.2L373.7 475.7L374.7 468.2L375.7 460.6L376.7 452.9L377.7 445.3L378.7 437.6L379.7 429.9L380.7 422.2L381.7 414.5L382.7 406.8L383.7 399.1L384.7 391.5L385.7 383.8L386.7 376.2L387.7 368.7L388.7 361.1L389.7 353.7L390.7 346.2L391.7 338.9L392.7 331.6L393.7 324.4L394.7 317.3L395.7 310.2L396.7 303.3L397.7 296.4L398.7 289.7L399.7 283.0L400.7 276.5L401.7 270.1L402.7 263.8L403.7 257.7L404.7 251.7L405.7 245.8L406.7 240.1L407.7 234.5L408.7 229.1L409.7 223.9L410.7 218.8L411.7 213.8L412.7 209.1L413.7 204.5L414.7 200.1L415.7 195.9L416.7 191.9L417.7 188.1L418.7 184.4L419.7 181.0L420.7 177.7L421.7 174.7L422.7 171.9L423.7 169.2L424.7 166.8L425.7 164.6L426.7 162.6L427.7 160.9L428.7 159.3L429.7 158.0L430.7 156.8L431.7 155.9L432.7 155.2L433.7 154.8L434.7 154.5L435.7 154.5L436.7 154.7L437.7 155.1L438.7 155.8L439.7 156.7L440.7 157.7L441.7 159.0L442.7 160.6L443.7 162.3L444.7 164.3L445.7 166.4L446.7 168.8L447.7 171.4L448.7 174.2L449.7 177.2L450.7 180.4L451.7 183.8L452.7 187.4L453.7 191.2L454.7 195.2L455.7 199.4L456.7 203.7L457.7 208.3L458.7 213.0L459.7 217.9L460.7 223.0L461.7 228.2L462.7 233.6L463.7 239.1L464.7 244.8L465.7 250.6L466.7 256.6L467.7 262.8L468.7 269.0L469.7 275.4L470.7 281.9L471.7 288.5L472.7 295.2L473.7 302.1L474.7 309.0L475.7 316.0L476.7 323.1L477.7 330.3L478.7 337.6L479.7 344.9L480.7 352.3L481.7 359.8L482.7 367.3L483.7 374.9L484.7 382.5L485.7 390.1L486.7 397.8L487.7 405.4L488.7 413.1L489.7 420.8L490.7 428.5L491.7 436.2L492.7 443.9L493.7 451.6L494.7 459.2L495.7 466.8L496.7 474.4L497.7 481.9L498.7 489.4L499.7 496.8L500.7 504.2L501.7 511.5L502.7 518.7L503.7 525.8L504.7 532.9L505.7 539.8L506.7 546.7L507.7 553.5L508.7 560.1L509.7 566.6L510.7 573.0L511.7 579.3L512.7 585.5L513.7 591.5L514.7 597.4L515.7 603.1L516.7 608.7L517.7 614.1L518.7 619.4L519.7 624.5L520.7 629.5L521.7 634.2L522.7 638.8L523.7 643.2L524.7 647.5L525.7 651.5L526.7 655.4L527.7 659.0L528.7 662.5L529.7 665.7L530.7 668.8L531.7 671.7L532.7 674.3L533.7 676.7L534.7 679.0L535.7 681.0L536.7 682.8L537.7 684.4L538.7 685.7L539.7 686.9L540.7 687.8L541.7 688.5L542.7 689.0L543.7 689.2L544.7 689.3L545.7 689.1L546.7 688.7L547.7 688.1L548.7 687.2L549.7 686.2L550.7 684.9L551.7 683.4L552.7 681.7L553.7 679.7L554.7 677.6L555.7 675.2L556.7 672.7L557.7 669.9L558.7 666.9L559.7 663.7L560.7 660.3L561.7 656.8L562.7 653.0L563.7 649.0L564.7 644.9L565.7 640.5L566.7 636.0L567.7 631.3L568.7 626.4L569.7 621.4L570.7 616.2L571.7 610.8L572.7 605.3L573.7 599.6L574.7 593.7L575.7 587.8L576.7 581.7L577.7 575.4L578.7 569.1L579.7 562.6L580.7 556.0L581.7 549.2L582.7 542.4L583.7 535.5L584.7 528.5L585.7 521.4L586.7 514.2L587.7 506.9L588.7 499.6L589.7 492.2L590.7 484.7L591.7 477.2L592.7 469.7L593.7 462.1L594.7 454.5L595.7 446.8L596.7 439.1L597.7 431.4L598.7 423.7L599.7 416.0L600.7 408.3L601.7 400.7L602.7 393.0L603.7 385.3L604.7 377.7L605.7 370.2L606.7 362.6L607.7 355.1L608.7 347.7L609.7 340.4L610.7 333.1L611.7 325.8L612.7 318.7L613.7 311.6L614.7 304.7L615.7 297.8L616.7 291.0L617.7 284.4L618.7 277.8L619.7 271.4L620.7 265.1L621.7 258.9L622.7 252.9L623.7 247.0L624.7 241.2L625.7 235.6L626.7 230.2L627.7 224.9L628.7 219.8L629.7 214.8L630.7 210.0L631.7 205.4L632.7 201.0L633.7 196.7L634.7 192.7L635.7 188.8L636.7 185.1L637.7 181.7L638.7 178.4L639.7 175.3L640.7 172.4L641.7 169.8L642.7 167.3L643.7 165.1L644.7 163.0L645.7 161.2L646.7 159.6L647.7 158.2L648.7 157.0L649.7 156.1L650.7 155.4L651.7 154.9L652.7 154.6L653.7 154.5L654.7 154.7L655.7 155.0L656.7 155.6L657.7 156.5L658.7 157.5L659.7 158.8L660.7 160.2L661.7 161.9L662.7 163.9L663.7 166.0L664.7 168.3L665.7 170.9L666.7 173.6L667.7 176.6L668.7 179.7L669.7 183.1L670.7 186.7L671.7 190.4L672.7 194.4L673.7 198.5L674.7 202.8L675.7 207.4L676.7 212.0L677.7 216.9L678.7 221.9L679.7 227.1L680.7 232.5L681.7 238.0L682.7 243.7L683.7 249.5L684.7 255.4L685.7 261.5L686.7 267.7L687.7 274.1L688.7 280.6L689.7 287.2L690.7 293.9L691.7 300.7L692.7 307.6L693.7 314.6L694.7 321.7L695.7 328.9L696.7 336.1L697.7 343.5L698.7 350.9L699.7 358.3L700.7 365.8L701.7 373.4L702.7 381.0L703.7 388.6L704.7 396.2L705.7 403.9L706.7 411.6L707.7 419.3L708.7 427.0L709.7 434.7L710.7 442.4L711.7 450.0L712.7 457.7L713.7 465.3L714.7 472.9L715.7 480.4L716.7 487.9L717.7 495.3L718.7 502.7L719.7 510.0L720.7 517.2L721.7 524.4L722.7 531.5L723.7 538.4L724.7 545.3L725.7 552.1L726.7 558.8L727.7 565.3L728.7 571.8L729.7 578.1L730.7 584.3L731.7 590.3L732.7 596.2L733.7 602.0L734.7 607.6L735.7 613.1L736.7 618.4L737.7 623.5L738.7 628.5L739.7 633.3L740.7 637.9L741.7 642.4L742.7 646.6L743.7 650.7L744.7 654.6L745.7 658.3L746.7 661.8L747.7 665.1L748.7 668.2L749.7 671.1L750.7 673.8L751.7 676.3L752.7 678.5L753.7 680.6L754.7 682.4L755.7 684.1L756.7 685.5L757.7 686.7L758.7 687.6L759.7 688.4L760.7 688.9L761.7 689.2L762.7 689.3L763.7 689.2L764.7 688.8L765.7 688.2L766.7 687.4L767.7 686.4L768.7 685.2L769.7 683.7L770.7 682.0L771.7 680.1L772.7 678.0L773.7 675.7L774.7 673.2L775.7 670.5L776.7 667.5L777.7 664.4L778.7 661.0L779.7 657.5L780.7 653.7L781.7 649.8L782.7 645.7L783.7 641.4L784.7 636.9L785.7 632.2L786.7 627.4L787.7 622.4L788.7 617.2L789.7 611.9L790.7 606.4L791.7 600.7L792.7 594.9L793.7 589.0L794.7 582.9L795.7 576.7L796.7 570.3L797.7 563.9L798.7 557.3L799.7 550.6L800.7 543.8L801.7 536.9L802.7 529.9L803.7 522.8L804.7 515.6L805.7 508.4L806.7 501.1L807.7 493.7L808.7 486.2L809.7 478.7L810.7 471.2L811.7 463.6L812.7 456.0L813.7 448.3L814.7 440.7L815.7 433.0L816.7 425.3L817.7 417.6L818.7 409.9L819.7 402.2L820.7 394.5L821.7 386.9L822.7 379.3L823.7 371.7L824.7 364.1L825.7 356.6L826.7 349.2L827.7 341.8L828.7 334.5L829.7 327.3L830.7 320.1L831.7 313.0L832.7 306.0L833.7 299.2L834.7 292.4L835.7 285.7L836.7 279.1L837.7 272.7L838.7 266.3L839.7 260.1L840.7 254.1L841.7 248.2L842.7 242.4L843.7 236.7L844.7 231.3L845.7 225.9L846.7 220.8L847.7 215.8L848.7 211.0L849.7 206.3L850.7 201.9L851.7 197.6L852.7 193.5L853.7 189.6L854.7 185.9L855.7 182.3L856.7 179.0L857.7 175.9L858.7 173.0L859.7 170.3L860.7 167.8L861.7 165.5L862.7 163.4L863.7 161.5L864.7 159.9L865.7 158.5L866.7 157.3L867.7 156.3L868.7 155.5L869.7 154.9L870.7 154.6L871.7 154.5L872.7 154.6L873.7 154.9L874.7 155.5L875.7 156.3L876.7 157.3L877.7 158.5L878.7 159.9L879.7 161.6L880.7 163.5L881.7 165.5L882.7 167.8L883.7 170.3L884.7 173.1L885.7 176.0L886.7 179.1L887.7 182.4L888.7 185.9L889.7 189.7L890.7 193.6L891.7 197.7L892.7 202.0L893.7 206.4L894.7 211.1L895.7 215.9L896.7 220.9L897.7 226.1L898.7 231.4L899.7 236.9L900.7 242.5L901.7 248.3L902.7 254.2L903.7 260.3L904.7 266.5L905.7 272.8L906.7 279.3L907.7 285.8L908.7 292.5L909.7 299.3L910.7 306.2L911.7 313.2L912.7 320.3L913.7 327.4L914.7 334.7L915.7 342.0L916.7 349.4L917.7 356.8L918.7 364.3L919.7 371.9L920.7 379.4L921.7 387.1L922.7 394.7L923.7 402.4L924.7 410.1L925.7 417.8L926.7 425.5L927.7 433.2L928.7 440.8L929.7 448.5L930.7 456.2L931.7 463.8L932.7 471.4L933.7 478.9L934.7 486.4L935.7 493.9L936.7 501.2L937.7 508.6L938.7 515.8L939.7 523.0L940.7 530.1L941.7 537.1L942.7 544.0L943.7 550.8L944.7 557.5L945.7 564.0L946.7 570.5L947.7 576.8L948.7 583.0L949.7 589.1L950.7 595.1L951.7 600.9L952.7 606.5L953.7 612.0L954.7 617.3L955.7 622.5L956.7 627.5L957.7 632.3L958.7 637.0L959.7 641.5L960.7 645.8L961.7 649.9L962.7 653.8L963.7 657.6L964.7 661.1L965.7 664.5L966.7 667.6L967.7 670.5L968.7 673.3L969.7 675.8L970.7 678.1L971.7 680.2L972.7 682.1L973.7 683.7L974.7 685.2L975.7 686.4L976.7 687.4L977.7 688.2L978.7 688.8L979.7 689.2L980.7 689.3L981.7 689.2L982.7 688.9L983.7 688.4L984.7 687.6L985.7 686.6L986.7 685.4L987.7 684.0L988.7 682.4L989.7 680.5L990.7 678.5L991.7 676.2L992.7 673.7L993.7 671.0L994.7 668.1L995.7 665.0L996.7 661.7L997.7 658.2L998.7 654.5L999.7 650.6L1000.7 646.5L1001.7 642.3L1002.7 637.8L1003.7 633.2L1004.7 628.4L1005.7 623.4L1006.7 618.3L1007.7 612.9L1008.7 607.5L1009.7 601.9L1010.7 596.1L1011.7 590.2L1012.7 584.1L1013.7 577.9L1014.7 571.6L1015.7 565.2L1016.7 558.6L1017.7 551.9L1018.7 545.2L1019.7 538.3L1020.7 531.3L1021.7 524.2L1022.7 517.1L1023.7 509.8L1024.7 502.5L1025.7 495.2L1026.7 487.7L1027.7 480.2L1028.7 472.7L1029.7 465.1L1030.7 457.5L1031.7 449.9L1032.7 442.2L1033.7 434.5L1034.7 426.8L1035.7 419.1L1036.7 411.4L1037.7 403.7L1038.7 396.1L1039.7 388.4L1040.7 380.8L1041.7 373.2L1042.7 365.6L1043.7 358.1L1044.7 350.7L1045.7 343.3L1046.7 336.0L1047.7 328.7L1048.7 321.5L1049.7 314.4L1050.7 307.4L1051.7 300.5L1052.7 293.7L1053.7 287.0L1054.7 280.4L1055.7 273.9L1056.7 267.6L1057.7 261.4L1058.7 255.3L1059.7 249.3L1060.7 243.5L1061.7 237.9L1062.7 232.3L1063.7 227.0L1064.7 221.8L1065.7 216.8L1066.7 211.9L1067.7 207.2L1068.7 202.7L1069.7 198.4L1070.7 194.3L1071.7 190.3L1072.7 186.6L1073.7 183.0L1074.7 179.7L1075.7 176.5L1076.7 173.6L1077.7 170.8L1078.7 168.3L1079.7 165.9L1080.7 163.8L1081.7 161.9L1082.7 160.2L1083.7 158.7L1084.7 157.5L1085.7 156.4L1086.7 155.6L1087.7 155.0L1088.7 154.7L1089.7 154.5L1090.7 154.6L1091.7 154.9L1092.7 155.4L1093.7 156.1L1094.7 157.1L1095.7 158.2L1096.7 159.6L1097.7 161.2L1098.7 163.1L1099.7 165.1L1100.7 167.4L1101.7 169.8L1102.7 172.5L1103.7 175.4L1104.7 178.5L1105.7 181.7L1106.7 185.2L1107.7 188.9L1108.7 192.8L1109.7 196.8L1110.7 201.1L1111.7 205.5L1112.7 210.1L1113.7 214.9L1114.7 219.9L1115.7 225.0L1116.7 230.3L1117.7 235.8L1118.7 241.4L1119.7 247.1L1120.7 253.0L1121.7 259.1L1122.7 265.2L1123.7 271.5L1124.7 278.0L1125.7 284.5L1126.7 291.2L1127.7 297.9L1128.7 304.8L1129.7 311.8L1130.7 318.9L1131.7 326.0L1132.7 333.2L1133.7 340.5L1134.7 347.9L1135.7 355.3L1136.7 362.8L1137.7 370.3L1138.7 377.9L1139.7 385.5L1140.7 393.2L1141.7 400.8L1142.7 408.5L1143.7 416.2L1144.7 423.9" stroke="#d4d424" stroke-width="2.100"/><path d="M53.7 469.1L54.7 466.9L55.7 464.6L56.7 462.3L57.7 460.0L58.7 457.6L59.7 455.2L60.7 452.8L61.7 450.4L62.7 447.9L63.7 445.4L64.7 442.9L65.7 440.4L66.7 437.9L67.7 435.3L68.7 432.7L69.7 430.2L70.7 427.6L71.7 425.0L72.7 422.4L73.7 419.8L74.7 417.2L75.7 414.7L76.7 412.1L77.7 409.5L78.7 407.0L79.7 404.4L80.7 401.9L81.7 399.4L82.7 396.9L83.7 394.4L84.7 392.0L85.7 389.5L86.7 387.1L87.7 384.8L88.7 382.4L89.7 380.1L90.7 377.8L91.7 375.6L92.7 373.4L93.7 371.3L94.7 369.1L95.7 367.1L96.7 365.0L97.7 363.1L98.7 361.1L99.7 359.2L100.7 357.4L101.7 355.6L102.7 353.9L103.7 352.3L104.7 350.7L105.7 349.1L106.7 347.6L107.7 346.2L108.7 344.8L109.7 343.5L110.7 342.3L111.7 341.1L112.7 340.0L113.7 339.0L114.7 338.0L115.7 337.1L116.7 336.3L117.7 335.6L118.7 334.9L119.7 334.3L120.7 333.7L121.7 333.3L122.7 332.9L123.7 332.6L124.7 332.3L125.7 332.2L126.7 332.1L127.7 332.1L128.7 332.1L129.7 332.2L130.7 332.4L131.7 332.7L132.7 333.1L133.7 333.5L134.7 334.0L135.7 334.6L136.7 335.2L137.7 335.9L138.7 336.7L139.7 337.6L140.7 338.5L141.7 339.5L142.7 340.6L143.7 341.7L144.7 342.9L145.7 344.2L146.7 345.5L147.7 346.9L148.7 348.4L149.7 349.9L150.7 351.4L151.7 353.1L152.7 354.8L153.7 356.5L154.7 358.3L155.7 360.2L156.7 362.1L157.7 364.0L158.7 366.0L159.7 368.1L160.7 370.2L161.7 372.3L162.7 374.5L163.7 376.7L164.7 379.0L165.7 381.3L166.7 383.6L167.7 385.9L168.7 388.3L169.7 390.7L170.7 393.2L171.7 395.6L172.7 398.1L173.7 400.6L174.7 403.1L175.7 405.7L176.7 408.2L177.7 410.8L178.7 413.4L179.7 415.9L180.7 418.5L181.7 421.1L182.7 423.7L183.7 426.3L184.7 428.9L185.7 431.5L186.7 434.0L187.7 436.6L188.7 439.1L189.7 441.7L190.7 444.2L191.7 446.7L192.7 449.1L193.7 451.6L194.7 454.0L195.7 456.4L196.7 458.8L197.7 461.1L198.7 463.5L199.7 465.7L200.7 468.0L201.7 470.2L202.7 472.3L203.7 474.5L204.7 476.5L205.7 478.6L206.7 480.5L207.7 482.5L208.7 484.4L209.7 486.2L210.7 488.0L211.7 489.7L212.7 491.4L213.7 493.0L214.7 494.5L215.7 496.0L216.7 497.5L217.7 498.8L218.7 500.1L219.7 501.4L220.7 502.5L221.7 503.7L222.7 504.7L223.7 505.7L224.7 506.6L225.7 507.4L226.7 508.2L227.7 508.8L228.7 509.5L229.7 510.0L230.7 510.5L231.7 510.9L232.7 511.2L233.7 511.4L234.7 511.6L235.7 511.7L236.7 511.7L237.7 511.7L238.7 511.6L239.7 511.4L240.7 511.1L241.7 510.8L242.7 510.3L243.7 509.8L244.7 509.3L245.7 508.6L246.7 507.9L247.7 507.2L248.7 506.3L249.7 505.4L250.7 504.4L251.7 503.3L252.7 502.2L253.7 501.0L254.7 499.8L255.7 498.4L256.7 497.0L257.7 495.6L258.7 494.1L259.7 492.5L260.7 490.9L261.7 489.2L262.7 487.5L263.7 485.7L264.7 483.8L265.7 481.9L266.7 480.0L267.7 478.0L268.7 475.9L269.7 473.8L270.7 471.7L271.7 469.5L272.7 467.3L273.7 465.1L274.7 462.8L275.7 460.5L276.7 458.1L277.7 455.7L278.7 453.3L279.7 450.9L280.7 448.4L281.7 445.9L282.7 443.4L283.7 440.9L284.7 438.4L285.7 435.8L286.7 433.3L287.7 430.7L288.7 428.1L289.7 425.5L290.7 422.9L291.7 420.4L292.7 417.8L293.7 415.2L294.7 412.6L295.7 410.0L296.7 407.5L297.7 404.9L298.7 402.4L299.7 399.9L300.7 397.4L301.7 394.9L302.7 392.4L303.7 390.0L304.7 387.6L305.7 385.2L306.7 382.9L307.7 380.6L308.7 378.3L309.7 376.1L310.7 373.8L311.7 371.7L312.7 369.6L313.7 367.5L314.7 365.4L315.7 363.4L316.7 361.5L317.7 359.6L318.7 357.8L319.7 356.0L320.7 354.3L321.7 352.6L322.7 351.0L323.7 349.4L324.7 347.9L325.7 346.5L326.7 345.1L327.7 343.8L328.7 342.5L329.7 341.4L330.7 340.3L331.7 339.2L332.7 338.2L333.7 337.3L334.7 336.5L335.7 335.7L336.7 335.0L337.7 334.4L338.7 333.8L339.7 333.4L340.7 333.0L341.7 332.6L342.7 332.4L343.7 332.2L344.7 332.1L345.7 332.1L346.7 332.1L347.7 332.2L348.7 332.4L349.7 332.7L350.7 333.0L351.7 333.4L352.7 333.9L353.7 334.5L354.7 335.1L355.7 335.8L356.7 336.6L357.7 337.4L358.7 338.3L359.7 339.3L360.7 340.4L361.7 341.5L362.7 342.7L363.7 343.9L364.7 345.2L365.7 346.6L366.7 348.1L367.7 349.6L368.7 351.1L369.7 352.7L370.7 354.4L371.7 356.2L372.7 358.0L373.7 359.8L374.7 361.7L375.7 363.6L376.7 365.6L377.7 367.7L378.7 369.8L379.7 371.9L380.7 374.1L381.7 376.3L382.7 378.5L383.7 380.8L384.7 383.1L385.7 385.5L386.7 387.8L387.7 390.3L388.7 392.7L389.7 395.1L390.7 397.6L391.7 400.1L392.7 402.6L393.7 405.2L394.7 407.7L395.7 410.3L396.7 412.9L397.7 415.4L398.7 418.0L399.7 420.6L400.7 423.2L401.7 425.8L402.7 428.4L403.7 430.9L404.7 433.5L405.7 436.1L406.7 438.6L407.7 441.1L408.7 443.7L409.7 446.2L410.7 448.6L411.7 451.1L412.7 453.5L413.7 455.9L414.7 458.3L415.7 460.7L416.7 463.0L417.7 465.3L418.7 467.5L419.7 469.7L420.7 471.9L421.7 474.0L422.7 476.1L423.7 478.2L424.7 480.2L425.7 482.1L426.7 484.0L427.7 485.8L428.7 487.6L429.7 489.4L430.7 491.0L431.7 492.7L432.7 494.2L433.7 495.7L434.7 497.2L435.7 498.6L436.7 499.9L437.7 501.1L438.7 502.3L439.7 503.4L440.7 504.5L441.7 505.5L442.7 506.4L443.7 507.2L444.7 508.0L445.7 508.7L446.7 509.3L447.7 509.9L448.7 510.4L449.7 510.8L450.7 511.1L451.7 511.4L452.7 511.6L453.7 511.7L454.7 511.7L455.7 511.7L456.7 511.6L457.7 511.4L458.7 511.2L459.7 510.8L460.7 510.4L461.7 510.0L462.7 509.4L463.7 508.8L464.7 508.1L465.7 507.3L466.7 506.5L467.7 505.6L468.7 504.6L469.7 503.6L470.7 502.4L471.7 501.3L472.7 500.0L473.7 498.7L474.7 497.3L475.7 495.9L476.7 494.4L477.7 492.8L478.7 491.2L479.7 489.5L480.7 487.8L481.7 486.0L482.7 484.2L483.7 482.3L484.7 480.4L485.7 478.4L486.7 476.3L487.7 474.3L488.7 472.1L489.7 470.0L490.7 467.8L491.7 465.5L492.7 463.2L493.7 460.9L494.7 458.6L495.7 456.2L496.7 453.8L497.7 451.4L498.7 448.9L499.7 446.4L500.7 443.9L501.7 441.4L502.7 438.9L503.7 436.3L504.7 433.8L505.7 431.2L506.7 428.6L507.7 426.0L508.7 423.5L509.7 420.9L510.7 418.3L511.7 415.7L512.7 413.1L513.7 410.6L514.7 408.0L515.7 405.4L516.7 402.9L517.7 400.4L518.7 397.9L519.7 395.4L520.7 392.9L521.7 390.5L522.7 388.1L523.7 385.7L524.7 383.4L525.7 381.0L526.7 378.7L527.7 376.5L528.7 374.3L529.7 372.1L530.7 370.0L531.7 367.9L532.7 365.8L533.7 363.8L534.7 361.9L535.7 360.0L536.7 358.1L537.7 356.3L538.7 354.6L539.7 352.9L540.7 351.3L541.7 349.7L542.7 348.2L543.7 346.8L544.7 345.4L545.7 344.0L546.7 342.8L547.7 341.6L548.7 340.5L549.7 339.4L550.7 338.4L551.7 337.5L552.7 336.6L553.7 335.9L554.7 335.2L555.7 334.5L556.7 334.0L557.7 333.5L558.7 333.0L559.7 332.7L560.7 332.4L561.7 332.2L562.7 332.1L563.7 332.1L564.7 332.1L565.7 332.2L566.7 332.4L567.7 332.6L568.7 332.9L569.7 333.3L570.7 333.8L571.7 334.3L572.7 335.0L573.7 335.6L574.7 336.4L575.7 337.2L576.7 338.1L577.7 339.1L578.7 340.1L579.7 341.2L580.7 342.4L581.7 343.7L582.7 345.0L583.7 346.3L584.7 347.8L585.7 349.3L586.7 350.8L587.7 352.4L588.7 354.1L589.7 355.8L590.7 357.6L591.7 359.4L592.7 361.3L593.7 363.2L594.7 365.2L595.7 367.3L596.7 369.3L597.7 371.5L598.7 373.6L599.7 375.8L600.7 378.1L601.7 380.3L602.7 382.6L603.7 385.0L604.7 387.4L605.7 389.8L606.7 392.2L607.7 394.6L608.7 397.1L609.7 399.6L610.7 402.1L611.7 404.7L612.7 407.2L613.7 409.8L614.7 412.3L615.7 414.9L616.7 417.5L617.7 420.1L618.7 422.7L619.7 425.3L620.7 427.8L621.7 430.4L622.7 433.0L623.7 435.6L624.7 438.1L625.7 440.6L626.7 443.2L627.7 445.7L628.7 448.2L629.7 450.6L630.7 453.1L631.7 455.5L632.7 457.9L633.7 460.2L634.7 462.5L635.7 464.8L636.7 467.1L637.7 469.3L638.7 471.5L639.7 473.6L640.7 475.7L641.7 477.8L642.7 479.8L643.7 481.7L644.7 483.6L645.7 485.5L646.7 487.3L647.7 489.0L648.7 490.7L649.7 492.3L650.7 493.9L651.7 495.4L652.7 496.9L653.7 498.3L654.7 499.6L655.7 500.9L656.7 502.1L657.7 503.2L658.7 504.3L659.7 505.3L660.7 506.2L661.7 507.1L662.7 507.9L663.7 508.6L664.7 509.2L665.7 509.8L666.7 510.3L667.7 510.7L668.7 511.1L669.7 511.4L670.7 511.6L671.7 511.7L672.7 511.7L673.7 511.7L674.7 511.6L675.7 511.5L676.7 511.2L677.7 510.9L678.7 510.5L679.7 510.1L680.7 509.5L681.7 508.9L682.7 508.2L683.7 507.5L684.7 506.7L685.7 505.8L686.7 504.8L687.7 503.8L688.7 502.7L689.7 501.5L690.7 500.3L691.7 499.0L692.7 497.6L693.7 496.2L694.7 494.7L695.7 493.1L696.7 491.5L697.7 489.9L698.7 488.2L699.7 486.4L700.7 484.6L701.7 482.7L702.7 480.7L703.7 478.8L704.7 476.7L705.7 474.7L706.7 472.6L707.7 470.4L708.7 468.2L709.7 466.0L710.7 463.7L711.7 461.4L712.7 459.0L713.7 456.7L714.7 454.3L715.7 451.8L716.7 449.4L717.7 446.9L718.7 444.4L719.7 441.9L720.7 439.4L721.7 436.8L722.7 434.3L723.7 431.7L724.7 429.1L725.7 426.6L726.7 424.0L727.7 421.4L728.7 418.8L729.7 416.2L730.7 413.6L731.7 411.1L732.7 408.5L733.7 405.9L734.7 403.4L735.7 400.9L736.7 398.4L737.7 395.9L738.7 393.4L739.7 391.0L740.7 388.6L741.7 386.2L742.7 383.8L743.7 381.5L744.7 379.2L745.7 376.9L746.7 374.7L747.7 372.5L748.7 370.4L749.7 368.3L750.7 366.2L751.7 364.2L752.7 362.3L753.7 360.4L754.7 358.5L755.7 356.7L756.7 354.9L757.7 353.3L758.7 351.6L759.7 350.0L760.7 348.5L761.7 347.0L762.7 345.6L763.7 344.3L764.7 343.0L765.7 341.8L766.7 340.7L767.7 339.6L768.7 338.6L769.7 337.7L770.7 336.8L771.7 336.0L772.7 335.3L773.7 334.6L774.7 334.1L775.7 333.6L776.7 333.1L777.7 332.8L778.7 332.5L779.7 332.3L780.7 332.1L781.7 332.1L782.7 332.1L783.7 332.2L784.7 332.3L785.7 332.5L786.7 332.9L787.7 333.2L788.7 333.7L789.7 334.2L790.7 334.8L791.7 335.5L792.7 336.2L793.7 337.1L794.7 337.9L795.7 338.9L796.7 339.9L797.7 341.0L798.7 342.2L799.7 343.4L800.7 344.7L801.7 346.1L802.7 347.5L803.7 349.0L804.7 350.5L805.7 352.1L806.7 353.8L807.7 355.5L808.7 357.2L809.7 359.1L810.7 360.9L811.7 362.9L812.7 364.8L813.7 366.9L814.7 368.9L815.7 371.0L816.7 373.2L817.7 375.4L818.7 377.6L819.7 379.9L820.7 382.2L821.7 384.5L822.7 386.9L823.7 389.3L824.7 391.7L825.7 394.2L826.7 396.6L827.7 399.1L828.7 401.6L829.7 404.2L830.7 406.7L831.7 409.3L832.7 411.8L833.7 414.4L834.7 417.0L835.7 419.6L836.7 422.2L837.7 424.7L838.7 427.3L839.7 429.9L840.7 432.5L841.7 435.0L842.7 437.6L843.7 440.1L844.7 442.7L845.7 445.2L846.7 447.7L847.7 450.1L848.7 452.6L849.7 455.0L850.7 457.4L851.7 459.7L852.7 462.1L853.7 464.4L854.7 466.6L855.7 468.9L856.7 471.0L857.7 473.2L858.7 475.3L859.7 477.3L860.7 479.4L861.7 481.3L862.7 483.2L863.7 485.1L864.7 486.9L865.7 488.7L866.7 490.4L867.7 492.0L868.7 493.6L869.7 495.1L870.7 496.6L871.7 498.0L872.7 499.4L873.7 500.6L874.7 501.9L875.7 503.0L876.7 504.1L877.7 505.1L878.7 506.0L879.7 506.9L880.7 507.7L881.7 508.4L882.7 509.1L883.7 509.7L884.7 510.2L885.7 510.6L886.7 511.0L887.7 511.3L888.7 511.5L889.7 511.7L890.7 511.7L891.7 511.7L892.7 511.7L893.7 511.5L894.7 511.3L895.7 511.0L896.7 510.6L897.7 510.2L898.7 509.6L899.7 509.0L900.7 508.4L901.7 507.6L902.7 506.8L903.7 505.9L904.7 505.0L905.7 504.0L906.7 502.9L907.7 501.7L908.7 500.5L909.7 499.2L910.7 497.9L911.7 496.5L912.7 495.0L913.7 493.5L914.7 491.9L915.7 490.2L916.7 488.5L917.7 486.7L918.7 484.9L919.7 483.1L920.7 481.1L921.7 479.2L922.7 477.2L923.7 475.1L924.7 473.0L925.7 470.8L926.7 468.6L927.7 466.4L928.7 464.1L929.7 461.8L930.7 459.5L931.7 457.2L932.7 454.8L933.7 452.3L934.7 449.9L935.7 447.4L936.7 444.9L937.7 442.4L938.7 439.9L939.7 437.4L940.7 434.8L941.7 432.2L942.7 429.7L943.7 427.1L944.7 424.5L945.7 421.9L946.7 419.3L947.7 416.7L948.7 414.2L949.7 411.6L950.7 409.0L951.7 406.5L952.7 403.9L953.7 401.4L954.7 398.9L955.7 396.4L956.7 393.9L957.7 391.5L958.7 389.1L959.7 386.7L960.7 384.3L961.7 382.0L962.7 379.7L963.7 377.4L964.7 375.2L965.7 373.0L966.7 370.8L967.7 368.7L968.7 366.7L969.7 364.6L970.7 362.7L971.7 360.7L972.7 358.9L973.7 357.1L974.7 355.3L975.7 353.6L976.7 351.9L977.7 350.3L978.7 348.8L979.7 347.3L980.7 345.9L981.7 344.6L982.7 343.3L983.7 342.1L984.7 340.9L985.7 339.8L986.7 338.8L987.7 337.9L988.7 337.0L989.7 336.2L990.7 335.4L991.7 334.8L992.7 334.2L993.7 333.6L994.7 333.2L995.7 332.8L996.7 332.5L997.7 332.3L998.7 332.1L999.7 332.1L1000.7 332.1L1001.7 332.1L1002.7 332.3L1003.7 332.5L1004.7 332.8L1005.7 333.2L1006.7 333.6L1007.7 334.1L1008.7 334.7L1009.7 335.4L1010.7 336.1L1011.7 336.9L1012.7 337.8L1013.7 338.7L1014.7 339.7L1015.7 340.8L1016.7 341.9L1017.7 343.2L1018.7 344.4L1019.7 345.8L1020.7 347.2L1021.7 348.7L1022.7 350.2L1023.7 351.8L1024.7 353.4L1025.7 355.1L1026.7 356.9L1027.7 358.7L1028.7 360.6L1029.7 362.5L1030.7 364.4L1031.7 366.4L1032.7 368.5L1033.7 370.6L1034.7 372.7L1035.7 374.9L1036.7 377.2L1037.7 379.4L1038.7 381.7L1039.7 384.0L1040.7 386.4L1041.7 388.8L1042.7 391.2L1043.7 393.7L1044.7 396.1L1045.7 398.6L1046.7 401.1L1047.7 403.7L1048.7 406.2L1049.7 408.7L1050.7 411.3L1051.7 413.9L1052.7 416.5L1053.7 419.1L1054.7 421.6L1055.7 424.2L1056.7 426.8L1057.7 429.4L1058.7 432.0L1059.7 434.5L1060.7 437.1L1061.7 439.6L1062.7 442.2L1063.7 444.7L1064.7 447.2L1065.7 449.6L1066.7 452.1L1067.7 454.5L1068.7 456.9L1069.7 459.3L1070.7 461.6L1071.7 463.9L1072.7 466.2L1073.7 468.4L1074.7 470.6L1075.7 472.8L1076.7 474.9L1077.7 476.9L1078.7 479.0L1079.7 480.9L1080.7 482.9L1081.7 484.7L1082.7 486.6L1083.7 488.3L1084.7 490.0L1085.7 491.7L1086.7 493.3L1087.7 494.8L1088.7 496.3L1089.7 497.7L1090.7 499.1L1091.7 500.4L1092.7 501.6L1093.7 502.8L1094.7 503.9L1095.7 504.9L1096.7 505.8L1097.7 506.7L1098.7 507.6L1099.7 508.3L1100.7 509.0L1101.7 509.6L1102.7 510.1L1103.7 510.6L1104.7 510.9L1105.7 511.3L1106.7 511.5L1107.7 511.6L1108.7 511.7L1109.7 511.7L1110.7 511.7L1111.7 511.5L1112.7 511.3L1113.7 511.0L1114.7 510.7L1115.7 510.2L1116.7 509.7L1117.7 509.2L1118.7 508.5L1119.7 507.8L1120.7 507.0L1121.7 506.1L1122.7 505.2L1123.7 504.2L1124.7 503.1L1125.7 502.0L1126.7 500.8L1127.7 499.5L1128.7 498.2L1129.7 496.8L1130.7 495.3L1131.7 493.8L1132.7 492.2L1133.7 490.6L1134.7 488.9L1135.7 487.1L1136.7 485.3L1137.7 483.4L1138.7 481.5L1139.7 479.6L1140.7 477.6L1141.7 475.5L1142.7 473.4L1143.7 471.3L1144.7 469.1" stroke="#148080" stroke-width="4.600"/><path d="M53.7 469.1L54.7 466.9L55.7 464.6L56.7 462.3L57.7 460.0L58.7 457.6L59.7 455.2L60.7 452.8L61.7 450.4L62.7 447.9L63.7 445.4L64.7 442.9L65.7 440.4L66.7 437.9L67.7 435.3L68.7 432.7L69.7 430.2L70.7 427.6L71.7 425.0L72.7 422.4L73.7 419.8L74.7 417.2L75.7 414.7L76.7 412.1L77.7 409.5L78.7 407.0L79.7 404.4L80.7 401.9L81.7 399.4L82.7 396.9L83.7 394.4L84.7 392.0L85.7 389.5L86.7 387.1L87.7 384.8L88.7 382.4L89.7 380.1L90.7 377.8L91.7 375.6L92.7 373.4L93.7 371.3L94.7 369.1L95.7 367.1L96.7 365.0L97.7 363.1L98.7 361.1L99.7 359.2L100.7 357.4L101.7 355.6L102.7 353.9L103.7 352.3L104.7 350.7L105.7 349.1L106.7 347.6L107.7 346.2L108.7 344.8L109.7 343.5L110.7 342.3L111.7 341.1L112.7 340.0L113.7 339.0L114.7 338.0L115.7 337.1L116.7 336.3L117.7 335.6L118.7 334.9L119.7 334.3L120.7 333.7L121.7 333.3L122.7 332.9L123.7 332.6L124.7 332.3L125.7 332.2L126.7 332.1L127.7 332.1L128.7 332.1L129.7 332.2L130.7 332.4L131.7 332.7L132.7 333.1L133.7 333.5L134.7 334.0L135.7 334.6L136.7 335.2L137.7 335.9L138.7 336.7L139.7 337.6L140.7 338.5L141.7 339.5L142.7 340.6L143.7 341.7L144.7 342.9L145.7 344.2L146.7 345.5L147.7 346.9L148.7 348.4L149.7 349.9L150.7 351.4L151.7 353.1L152.7 354.8L153.7 356.5L154.7 358.3L155.7 360.2L156.7 362.1L157.7 364.0L158.7 366.0L159.7 368.1L160.7 370.2L161.7 372.3L162.7 374.5L163.7 376.7L164.7 379.0L165.7 381.3L166.7 383.6L167.7 385.9L168.7 388.3L169.7 390.7L170.7 393.2L171.7 395.6L172.7 398.1L173.7 400.6L174.7 403.1L175.7 405.7L176.7 408.2L177.7 410.8L178.7 413.4L179.7 415.9L180.7 418.5L181.7 421.1L182.7 423.7L183.7 426.3L184.7 428.9L185.7 431.5L186.7 434.0L187.7 436.6L188.7 439.1L189.7 441.7L190.7 444.2L191.7 446.7L192.7 449.1L193.7 451.6L194.7 454.0L195.7 456.4L196.7 458.8L197.7 461.1L198.7 463.5L199.7 465.7L200.7 468.0L201.7 470.2L202.7 472.3L203.7 474.5L204.7 476.5L205.7 478.6L206.7 480.5L207.7 482.5L208.7 484.4L209.7 486.2L210.7 488.0L211.7 489.7L212.7 491.4L213.7 493.0L214.7 494.5L215.7 496.0L216.7 497.5L217.7 498.8L218.7 500.1L219.7 501.4L220.7 502.5L221.7 503.7L222.7 504.7L223.7 505.7L224.7 506.6L225.7 507.4L226.7 508.2L227.7 508.8L228.7 509.5L229.7 510.0L230.7 510.5L231.7 510.9L232.7 511.2L233.7 511.4L234.7 511.6L235.7 511.7L236.7 511.7L237.7 511.7L238.7 511.6L239.7 511.4L240.7 511.1L241.7 510.8L242.7 510.3L243.7 509.8L244.7 509.3L245.7 508.6L246.7 507.9L247.7 507.2L248.7 506.3L249.7 505.4L250.7 504.4L251.7 503.3L252.7 502.2L253.7 501.0L254.7 499.8L255.7 498.4L256.7 497.0L257.7 495.6L258.7 494.1L259.7 492.5L260.7 490.9L261.7 489.2L262.7 487.5L263.7 485.7L264.7 483.8L265.7 481.9L266.7 480.0L267.7 478.0L268.7 475.9L269.7 473.8L270.7 471.7L271.7 469.5L272.7 467.3L273.7 465.1L274.7 462.8L275.7 460.5L276.7 458.1L277.7 455.7L278.7 453.3L279.7 450.9L280.7 448.4L281.7 445.9L282.7 443.4L283.7 440.9L284.7 438.4L285.7 435.8L286.7 433.3L287.7 430.7L288.7 428.1L289.7 425.5L290.7 422.9L291.7 420.4L292.7 417.8L293.7 415.2L294.7 412.6L295.7 410.0L296.7 407.5L297.7 404.9L298.7 402.4L299.7 399.9L300.7 397.4L301.7 394.9L302.7 392.4L303.7 390.0L304.7 387.6L305.7 385.2L306.7 382.9L307.7 380.6L308.7 378.3L309.7 376.1L310.7 373.8L311.7 371.7L312.7 369.6L313.7 367.5L314.7 365.4L315.7 363.4L316.7 361.5L317.7 359.6L318.7 357.8L319.7 356.0L320.7 354.3L321.7 352.6L322.7 351.0L323.7 349.4L324.7 347.9L325.7 346.5L326.7 345.1L327.7 343.8L328.7 342.5L329.7 341.4L330.7 340.3L331.7 339.2L332.7 338.2L333.7 337.3L334.7 336.5L335.7 335.7L336.7 335.0L337.7 334.4L338.7 333.8L339.7 333.4L340.7 333.0L341.7 332.6L342.7 332.4L343.7 332.2L344.7 332.1L345.7 332.1L346.7 332.1L347.7 332.2L348.7 332.4L349.7 332.7L350.7 333.0L351.7 333.4L352.7 333.9L353.7 334.5L354.7 335.1L355.7 335.8L356.7 336.6L357.7 337.4L358.7 338.3L359.7 339.3L360.7 340.4L361.7 341.5L362.7 342.7L363.7 343.9L364.7 345.2L365.7 346.6L366.7 348.1L367.7 349.6L368.7 351.1L369.7 352.7L370.7 354.4L371.7 356.2L372.7 358.0L373.7 359.8L374.7 361.7L375.7 363.6L376.7 365.6L377.7 367.7L378.7 369.8L379.7 371.9L380.7 374.1L381.7 376.3L382.7 378.5L383.7 380.8L384.7 383.1L385.7 385.5L386.7 387.8L387.7 390.3L388.7 392.7L389.7 395.1L390.7 397.6L391.7 400.1L392.7 402.6L393.7 405.2L394.7 407.7L395.7 410.3L396.7 412.9L397.7 415.4L398.7 418.0L399.7 420.6L400.7 423.2L401.7 425.8L402.7 428.4L403.7 430.9L404.7 433.5L405.7 436.1L406.7 438.6L407.7 441.1L408.7 443.7L409.7 446.2L410.7 448.6L411.7 451.1L412.7 453.5L413.7 455.9L414.7 458.3L415.7 460.7L416.7 463.0L417.7 465.3L418.7 467.5L419.7 469.7L420.7 471.9L421.7 474.0L422.7 476.1L423.7 478.2L424.7 480.2L425.7 482.1L426.7 484.0L427.7 485.8L428.7 487.6L429.7 489.4L430.7 491.0L431.7 492.7L432.7 494.2L433.7 495.7L434.7 497.2L435.7 498.6L436.7 499.9L437.7 501.1L438.7 502.3L439.7 503.4L440.7 504.5L441.7 505.5L442.7 506.4L443.7 507.2L444.7 508.0L445.7 508.7L446.7 509.3L447.7 509.9L448.7 510.4L449.7 510.8L450.7 511.1L451.7 511.4L452.7 511.6L453.7 511.7L454.7 511.7L455.7 511.7L456.7 511.6L457.7 511.4L458.7 511.2L459.7 510.8L460.7 510.4L461.7 510.0L462.7 509.4L463.7 508.8L464.7 508.1L465.7 507.3L466.7 506.5L467.7 505.6L468.7 504.6L469.7 503.6L470.7 502.4L471.7 501.3L472.7 500.0L473.7 498.7L474.7 497.3L475.7 495.9L476.7 494.4L477.7 492.8L478.7 491.2L479.7 489.5L480.7 487.8L481.7 486.0L482.7 484.2L483.7 482.3L484.7 480.4L485.7 478.4L486.7 476.3L487.7 474.3L488.7 472.1L489.7 470.0L490.7 467.8L491.7 465.5L492.7 463.2L493.7 460.9L494.7 458.6L495.7 456.2L496.7 453.8L497.7 451.4L498.7 448.9L499.7 446.4L500.7 443.9L501.7 441.4L502.7 438.9L503.7 436.3L504.7 433.8L505.7 431.2L506.7 428.6L507.7 426.0L508.7 423.5L509.7 420.9L510.7 418.3L511.7 415.7L512.7 413.1L513.7 410.6L514.7 408.0L515.7 405.4L516.7 402.9L517.7 400.4L518.7 397.9L519.7 395.4L520.7 392.9L521.7 390.5L522.7 388.1L523.7 385.7L524.7 383.4L525.7 381.0L526.7 378.7L527.7 376.5L528.7 374.3L529.7 372.1L530.7 370.0L531.7 367.9L532.7 365.8L533.7 363.8L534.7 361.9L535.7 360.0L536.7 358.1L537.7 356.3L538.7 354.6L539.7 352.9L540.7 351.3L541.7 349.7L542.7 348.2L543.7 346.8L544.7 345.4L545.7 344.0L546.7 342.8L547.7 341.6L548.7 340.5L549.7 339.4L550.7 338.4L551.7 337.5L552.7 336.6L553.7 335.9L554.7 335.2L555.7 334.5L556.7 334.0L557.7 333.5L558.7 333.0L559.7 332.7L560.7 332.4L561.7 332.2L562.7 332.1L563.7 332.1L564.7 332.1L565.7 332.2L566.7 332.4L567.7 332.6L568.7 332.9L569.7 333.3L570.7 333.8L571.7 334.3L572.7 335.0L573.7 335.6L574.7 336.4L575.7 337.2L576.7 338.1L577.7 339.1L578.7 340.1L579.7 341.2L580.7 342.4L581.7 343.7L582.7 345.0L583.7 346.3L584.7 347.8L585.7 349.3L586.7 350.8L587.7 352.4L588.7 354.1L589.7 355.8L590.7 357.6L591.7 359.4L592.7 361.3L593.7 363.2L594.7 365.2L595.7 367.3L596.7 369.3L597.7 371.5L598.7 373.6L599.7 375.8L600.7 378.1L601.7 380.3L602.7 382.6L603.7 385.0L604.7 387.4L605.7 389.8L606.7 392.2L607.7 394.6L608.7 397.1L609.7 399.6L610.7 402.1L611.7 404.7L612.7 407.2L613.7 409.8L614.7 412.3L615.7 414.9L616.7 417.5L617.7 420.1L618.7 422.7L619.7 425.3L620.7 427.8L621.7 430.4L622.7 433.0L623.7 435.6L624.7 438.1L625.7 440.6L626.7 443.2L627.7 445.7L628.7 448.2L629.7 450.6L630.7 453.1L631.7 455.5L632.7 457.9L633.7 460.2L634.7 462.5L635.7 464.8L636.7 467.1L637.7 469.3L638.7 471.5L639.7 473.6L640.7 475.7L641.7 477.8L642.7 479.8L643.7 481.7L644.7 483.6L645.7 485.5L646.7 487.3L647.7 489.0L648.7 490.7L649.7 492.3L650.7 493.9L651.7 495.4L652.7 496.9L653.7 498.3L654.7 499.6L655.7 500.9L656.7 502.1L657.7 503.2L658.7 504.3L659.7 505.3L660.7 506.2L661.7 507.1L662.7 507.9L663.7 508.6L664.7 509.2L665.7 509.8L666.7 510.3L667.7 510.7L668.7 511.1L669.7 511.4L670.7 511.6L671.7 511.7L672.7 511.7L673.7 511.7L674.7 511.6L675.7 511.5L676.7 511.2L677.7 510.9L678.7 510.5L679.7 510.1L680.7 509.5L681.7 508.9L682.7 508.2L683.7 507.5L684.7 506.7L685.7 505.8L686.7 504.8L687.7 503.8L688.7 502.7L689.7 501.5L690.7 500.3L691.7 499.0L692.7 497.6L693.7 496.2L694.7 494.7L695.7 493.1L696.7 491.5L697.7 489.9L698.7 488.2L699.7 486.4L700.7 484.6L701.7 482.7L702.7 480.7L703.7 478.8L704.7 476.7L705.7 474.7L706.7 472.6L707.7 470.4L708.7 468.2L709.7 466.0L710.7 463.7L711.7 461.4L712.7 459.0L713.7 456.7L714.7 454.3L715.7 451.8L716.7 449.4L717.7 446.9L718.7 444.4L719.7 441.9L720.7 439.4L721.7 436.8L722.7 434.3L723.7 431.7L724.7 429.1L725.7 426.6L726.7 424.0L727.7 421.4L728.7 418.8L729.7 416.2L730.7 413.6L731.7 411.1L732.7 408.5L733.7 405.9L734.7 403.4L735.7 400.9L736.7 398.4L737.7 395.9L738.7 393.4L739.7 391.0L740.7 388.6L741.7 386.2L742.7 383.8L743.7 381.5L744.7 379.2L745.7 376.9L746.7 374.7L747.7 372.5L748.7 370.4L749.7 368.3L750.7 366.2L751.7 364.2L752.7 362.3L753.7 360.4L754.7 358.5L755.7 356.7L756.7 354.9L757.7 353.3L758.7 351.6L759.7 350.0L760.7 348.5L761.7 347.0L762.7 345.6L763.7 344.3L764.7 343.0L765.7 341.8L766.7 340.7L767.7 339.6L768.7 338.6L769.7 337.7L770.7 336.8L771.7 336.0L772.7 335.3L773.7 334.6L774.7 334.1L775.7 333.6L776.7 333.1L777.7 332.8L778.7 332.5L779.7 332.3L780.7 332.1L781.7 332.1L782.7 332.1L783.7 332.2L784.7 332.3L785.7 332.5L786.7 332.9L787.7 333.2L788.7 333.7L789.7 334.2L790.7 334.8L791.7 335.5L792.7 336.2L793.7 337.1L794.7 337.9L795.7 338.9L796.7 339.9L797.7 341.0L798.7 342.2L799.7 343.4L800.7 344.7L801.7 346.1L802.7 347.5L803.7 349.0L804.7 350.5L805.7 352.1L806.7 353.8L807.7 355.5L808.7 357.2L809.7 359.1L810.7 360.9L811.7 362.9L812.7 364.8L813.7 366.9L814.7 368.9L815.7 371.0L816.7 373.2L817.7 375.4L818.7 377.6L819.7 379.9L820.7 382.2L821.7 384.5L822.7 386.9L823.7 389.3L824.7 391.7L825.7 394.2L826.7 396.6L827.7 399.1L828.7 401.6L829.7 404.2L830.7 406.7L831.7 409.3L832.7 411.8L833.7 414.4L834.7 417.0L835.7 419.6L836.7 422.2L837.7 424.7L838.7 427.3L839.7 429.9L840.7 432.5L841.7 435.0L842.7 437.6L843.7 440.1L844.7 442.7L845.7 445.2L846.7 447.7L847.7 450.1L848.7 452.6L849.7 455.0L850.7 457.4L851.7 459.7L852.7 462.1L853.7 464.4L854.7 466.6L855.7 468.9L856.7 471.0L857.7 473.2L858.7 475.3L859.7 477.3L860.7 479.4L861.7 481.3L862.7 483.2L863.7 485.1L864.7 486.9L865.7 488.7L866.7 490.4L867.7 492.0L868.7 493.6L869.7 495.1L870.7 496.6L871.7 498.0L872.7 499.4L873.7 500.6L874.7 501.9L875.7 503.0L876.7 504.1L877.7 505.1L878.7 506.0L879.7 506.9L880.7 507.7L881.7 508.4L882.7 509.1L883.7 509.7L884.7 510.2L885.7 510.6L886.7 511.0L887.7 511.3L888.7 511.5L889.7 511.7L890.7 511.7L891.7 511.7L892.7 511.7L893.7 511.5L894.7 511.3L895.7 511.0L896.7 510.6L897.7 510.2L898.7 509.6L899.7 509.0L900.7 508.4L901.7 507.6L902.7 506.8L903.7 505.9L904.7 505.0L905.7 504.0L906.7 502.9L907.7 501.7L908.7 500.5L909.7 499.2L910.7 497.9L911.7 496.5L912.7 495.0L913.7 493.5L914.7 491.9L915.7 490.2L916.7 488.5L917.7 486.7L918.7 484.9L919.7 483.1L920.7 481.1L921.7 479.2L922.7 477.2L923.7 475.1L924.7 473.0L925.7 470.8L926.7 468.6L927.7 466.4L928.7 464.1L929.7 461.8L930.7 459.5L931.7 457.2L932.7 454.8L933.7 452.3L934.7 449.9L935.7 447.4L936.7 444.9L937.7 442.4L938.7 439.9L939.7 437.4L940.7 434.8L941.7 432.2L942.7 429.7L943.7 427.1L944.7 424.5L945.7 421.9L946.7 419.3L947.7 416.7L948.7 414.2L949.7 411.6L950.7 409.0L951.7 406.5L952.7 403.9L953.7 401.4L954.7 398.9L955.7 396.4L956.7 393.9L957.7 391.5L958.7 389.1L959.7 386.7L960.7 384.3L961.7 382.0L962.7 379.7L963.7 377.4L964.7 375.2L965.7 373.0L966.7 370.8L967.7 368.7L968.7 366.7L969.7 364.6L970.7 362.7L971.7 360.7L972.7 358.9L973.7 357.1L974.7 355.3L975.7 353.6L976.7 351.9L977.7 350.3L978.7 348.8L979.7 347.3L980.7 345.9L981.7 344.6L982.7 343.3L983.7 342.1L984.7 340.9L985.7 339.8L986.7 338.8L987.7 337.9L988.7 337.0L989.7 336.2L990.7 335.4L991.7 334.8L992.7 334.2L993.7 333.6L994.7 333.2L995.7 332.8L996.7 332.5L997.7 332.3L998.7 332.1L999.7 332.1L1000.7 332.1L1001.7 332.1L1002.7 332.3L1003.7 332.5L1004.7 332.8L1005.7 333.2L1006.7 333.6L1007.7 334.1L1008.7 334.7L1009.7 335.4L1010.7 336.1L1011.7 336.9L1012.7 337.8L1013.7 338.7L1014.7 339.7L1015.7 340.8L1016.7 341.9L1017.7 343.2L1018.7 344.4L1019.7 345.8L1020.7 347.2L1021.7 348.7L1022.7 350.2L1023.7 351.8L1024.7 353.4L1025.7 355.1L1026.7 356.9L1027.7 358.7L1028.7 360.6L1029.7 362.5L1030.7 364.4L1031.7 366.4L1032.7 368.5L1033.7 370.6L1034.7 372.7L1035.7 374.9L1036.7 377.2L1037.7 379.4L1038.7 381.7L1039.7 384.0L1040.7 386.4L1041.7 388.8L1042.7 391.2L1043.7 393.7L1044.7 396.1L1045.7 398.6L1046.7 401.1L1047.7 403.7L1048.7 406.2L1049.7 408.7L1050.7 411.3L1051.7 413.9L1052.7 416.5L1053.7 419.1L1054.7 421.6L1055.7 424.2L1056.7 426.8L1057.7 429.4L1058.7 432.0L1059.7 434.5L1060.7 437.1L1061.7 439.6L1062.7 442.2L1063.7 444.7L1064.7 447.2L1065.7 449.6L1066.7 452.1L1067.7 454.5L1068.7 456.9L1069.7 459.3L1070.7 461.6L1071.7 463.9L1072.7 466.2L1073.7 468.4L1074.7 470.6L1075.7 472.8L1076.7 474.9L1077.7 476.9L1078.7 479.0L1079.7 480.9L1080.7 482.9L1081.7 484.7L1082.7 486.6L1083.7 488.3L1084.7 490.0L1085.7 491.7L1086.7 493.3L1087.7 494.8L1088.7 496.3L1089.7 497.7L1090.7 499.1L1091.7 500.4L1092.7 501.6L1093.7 502.8L1094.7 503.9L1095.7 504.9L1096.7 505.8L1097.7 506.7L1098.7 507.6L1099.7 508.3L1100.7 509.0L1101.7 509.6L1102.7 510.1L1103.7 510.6L1104.7 510.9L1105.7 511.3L1106.7 511.5L1107.7 511.6L1108.7 511.7L1109.7 511.7L1110.7 511.7L1111.7 511.5L1112.7 511.3L1113.7 511.0L1114.7 510.7L1115.7 510.2L1116.7 509.7L1117.7 509.2L1118.7 508.5L1119.7 507.8L1120.7 507.0L1121.7 506.1L1122.7 505.2L1123.7 504.2L1124.7 503.1L1125.7 502.0L1126.7 500.8L1127.7 499.5L1128.7 498.2L1129.7 496.8L1130.7 495.3L1131.7 493.8L1132.7 492.2L1133.7 490.6L1134.7 488.9L1135.7 487.1L1136.7 485.3L1137.7 483.4L1138.7 481.5L1139.7 479.6L1140.7 477.6L1141.7 475.5L1142.7 473.4L1143.7 471.3L1144.7 469.1" stroke="#2ccccb" stroke-width="2.200"/></g><path d="M564.5 160V685M779.5 160V681M564 329.5H779" stroke="#cc1414" stroke-width="1.300" fill="none"/><rect x="218" y="155" width="2" height="535" fill="#e01515"/><rect x="346" y="155" width="2" height="535" fill="#e01515"/><path d="M54.7 416l11 6.500l-11 6.500z" fill="#f0f020"/><path d="M1144.7 416l-11 6.500l11 6.500z" fill="#f0f020"/><path d="M593 154h13l-6.500 12z" fill="#fff"/><path d="M1164.8 332.2L1160.0 332.2L1160.0 333.2L1160.0 334.2L1160.0 335.2L1160.0 336.2L1160.0 337.2L1160.0 338.2L1160.0 339.2L1160.0 340.2L1160.0 341.2L1160.0 342.2L1160.1 343.2L1160.2 344.2L1160.3 345.2L1160.3 346.2L1160.4 347.2L1160.4 348.2L1160.5 349.2L1160.5 350.2L1160.6 351.2L1160.6 352.2L1160.6 353.2L1160.7 354.2L1160.7 355.3L1160.7 356.3L1160.8 357.3L1160.8 358.3L1160.8 359.3L1160.8 360.3L1160.8 361.3L1160.9 362.3L1160.9 363.3L1160.9 364.3L1160.9 365.3L1160.9 366.3L1160.9 367.3L1161.0 368.3L1161.0 369.3L1161.0 370.3L1161.0 371.3L1161.0 372.3L1161.0 373.3L1161.0 374.3L1161.0 375.3L1161.0 376.3L1161.0 377.3L1161.1 378.3L1161.1 379.3L1161.1 380.3L1161.1 381.3L1161.1 382.3L1161.1 383.3L1161.1 384.3L1161.1 385.3L1161.1 386.3L1161.1 387.3L1161.1 388.3L1161.1 389.3L1161.1 390.3L1161.1 391.3L1161.1 392.3L1161.1 393.3L1161.1 394.3L1161.2 395.3L1161.2 396.3L1161.2 397.3L1161.2 398.3L1161.2 399.3L1161.2 400.4L1161.2 401.4L1161.2 402.4L1161.2 403.4L1161.2 404.4L1161.2 405.4L1161.2 406.4L1161.2 407.4L1161.2 408.4L1161.2 409.4L1161.2 410.4L1161.2 411.4L1161.2 412.4L1161.2 413.4L1161.2 414.4L1161.2 415.4L1161.2 416.4L1161.2 417.4L1161.2 418.4L1161.2 419.4L1161.2 420.4L1161.2 421.4L1161.2 422.4L1161.2 423.4L1161.2 424.4L1161.2 425.4L1161.2 426.4L1161.2 427.4L1161.2 428.4L1161.2 429.4L1161.2 430.4L1161.2 431.4L1161.2 432.4L1161.2 433.4L1161.2 434.4L1161.2 435.4L1161.2 436.4L1161.2 437.4L1161.2 438.4L1161.2 439.4L1161.2 440.4L1161.2 441.4L1161.2 442.4L1161.2 443.4L1161.2 444.5L1161.2 445.5L1161.2 446.5L1161.2 447.5L1161.2 448.5L1161.1 449.5L1161.1 450.5L1161.1 451.5L1161.1 452.5L1161.1 453.5L1161.1 454.5L1161.1 455.5L1161.1 456.5L1161.1 457.5L1161.1 458.5L1161.1 459.5L1161.1 460.5L1161.1 461.5L1161.1 462.5L1161.1 463.5L1161.1 464.5L1161.1 465.5L1161.0 466.5L1161.0 467.5L1161.0 468.5L1161.0 469.5L1161.0 470.5L1161.0 471.5L1161.0 472.5L1161.0 473.5L1161.0 474.5L1161.0 475.5L1160.9 476.5L1160.9 477.5L1160.9 478.5L1160.9 479.5L1160.9 480.5L1160.9 481.5L1160.8 482.5L1160.8 483.5L1160.8 484.5L1160.8 485.5L1160.8 486.5L1160.7 487.5L1160.7 488.5L1160.7 489.6L1160.6 490.6L1160.6 491.6L1160.6 492.6L1160.5 493.6L1160.5 494.6L1160.4 495.6L1160.4 496.6L1160.3 497.6L1160.3 498.6L1160.2 499.6L1160.1 500.6L1160.0 501.6L1160.0 502.6L1160.0 503.6L1160.0 504.6L1160.0 505.6L1160.0 506.6L1160.0 507.6L1160.0 508.6L1160.0 509.6L1160.0 510.6L1160.0 511.6L1164.8 511.6Z" fill="#2ccaca"/><path d="M1148 332.300H1162M1148 511.300H1162" stroke="#2ccaca" stroke-width="1.2"/><path d="M1164.8 154.5L1159.6 154.5L1159.6 155.5L1159.6 156.5L1159.6 157.5L1159.6 158.5L1159.6 159.5L1159.6 160.5L1159.6 161.5L1159.6 162.5L1159.6 163.5L1159.6 164.5L1159.6 165.5L1159.6 166.5L1159.7 167.5L1159.8 168.5L1160.0 169.5L1160.1 170.5L1160.2 171.5L1160.3 172.5L1160.4 173.5L1160.5 174.5L1160.6 175.5L1160.6 176.5L1160.7 177.5L1160.8 178.5L1160.8 179.5L1160.9 180.5L1160.9 181.5L1161.0 182.5L1161.0 183.5L1161.1 184.5L1161.1 185.5L1161.2 186.5L1161.2 187.5L1161.2 188.6L1161.3 189.6L1161.3 190.6L1161.3 191.6L1161.4 192.6L1161.4 193.6L1161.4 194.6L1161.5 195.6L1161.5 196.6L1161.5 197.6L1161.5 198.6L1161.6 199.6L1161.6 200.6L1161.6 201.6L1161.6 202.6L1161.6 203.6L1161.7 204.6L1161.7 205.6L1161.7 206.6L1161.7 207.6L1161.7 208.6L1161.8 209.6L1161.8 210.6L1161.8 211.6L1161.8 212.6L1161.8 213.6L1161.8 214.6L1161.9 215.6L1161.9 216.6L1161.9 217.6L1161.9 218.6L1161.9 219.6L1161.9 220.6L1161.9 221.6L1162.0 222.6L1162.0 223.6L1162.0 224.6L1162.0 225.6L1162.0 226.6L1162.0 227.6L1162.0 228.6L1162.0 229.6L1162.0 230.6L1162.0 231.6L1162.1 232.6L1162.1 233.6L1162.1 234.6L1162.1 235.6L1162.1 236.6L1162.1 237.6L1162.1 238.6L1162.1 239.6L1162.1 240.6L1162.1 241.6L1162.1 242.6L1162.2 243.6L1162.2 244.6L1162.2 245.6L1162.2 246.6L1162.2 247.6L1162.2 248.6L1162.2 249.6L1162.2 250.6L1162.2 251.6L1162.2 252.6L1162.2 253.6L1162.2 254.6L1162.2 255.7L1162.2 256.7L1162.3 257.7L1162.3 258.7L1162.3 259.7L1162.3 260.7L1162.3 261.7L1162.3 262.7L1162.3 263.7L1162.3 264.7L1162.3 265.7L1162.3 266.7L1162.3 267.7L1162.3 268.7L1162.3 269.7L1162.3 270.7L1162.3 271.7L1162.3 272.7L1162.3 273.7L1162.3 274.7L1162.3 275.7L1162.4 276.7L1162.4 277.7L1162.4 278.7L1162.4 279.7L1162.4 280.7L1162.4 281.7L1162.4 282.7L1162.4 283.7L1162.4 284.7L1162.4 285.7L1162.4 286.7L1162.4 287.7L1162.4 288.7L1162.4 289.7L1162.4 290.7L1162.4 291.7L1162.4 292.7L1162.4 293.7L1162.4 294.7L1162.4 295.7L1162.4 296.7L1162.4 297.7L1162.4 298.7L1162.4 299.7L1162.4 300.7L1162.4 301.7L1162.4 302.7L1162.5 303.7L1162.5 304.7L1162.5 305.7L1162.5 306.7L1162.5 307.7L1162.5 308.7L1162.5 309.7L1162.5 310.7L1162.5 311.7L1162.5 312.7L1162.5 313.7L1162.5 314.7L1162.5 315.7L1162.5 316.7L1162.5 317.7L1162.5 318.7L1162.5 319.7L1162.5 320.7L1162.5 321.8L1162.5 322.8L1162.5 323.8L1162.5 324.8L1162.5 325.8L1162.5 326.8L1162.5 327.8L1162.5 328.8L1162.5 329.8L1162.5 330.8L1162.5 331.8L1162.5 332.8L1162.5 333.8L1162.5 334.8L1162.5 335.8L1162.5 336.8L1162.5 337.8L1162.5 338.8L1162.5 339.8L1162.5 340.8L1162.5 341.8L1162.5 342.8L1162.5 343.8L1162.5 344.8L1162.5 345.8L1162.5 346.8L1162.5 347.8L1162.5 348.8L1162.5 349.8L1162.6 350.8L1162.6 351.8L1162.6 352.8L1162.6 353.8L1162.6 354.8L1162.6 355.8L1162.6 356.8L1162.6 357.8L1162.6 358.8L1162.6 359.8L1162.6 360.8L1162.6 361.8L1162.6 362.8L1162.6 363.8L1162.6 364.8L1162.6 365.8L1162.6 366.8L1162.6 367.8L1162.6 368.8L1162.6 369.8L1162.6 370.8L1162.6 371.8L1162.6 372.8L1162.6 373.8L1162.6 374.8L1162.6 375.8L1162.6 376.8L1162.6 377.8L1162.6 378.8L1162.6 379.8L1162.6 380.8L1162.6 381.8L1162.6 382.8L1162.6 383.8L1162.6 384.8L1162.6 385.8L1162.6 386.8L1162.6 387.8L1162.6 388.9L1162.6 389.9L1162.6 390.9L1162.6 391.9L1162.6 392.9L1162.6 393.9L1162.6 394.9L1162.6 395.9L1162.6 396.9L1162.6 397.9L1162.6 398.9L1162.6 399.9L1162.6 400.9L1162.6 401.9L1162.6 402.9L1162.6 403.9L1162.6 404.9L1162.6 405.9L1162.6 406.9L1162.6 407.9L1162.6 408.9L1162.6 409.9L1162.6 410.9L1162.6 411.9L1162.6 412.9L1162.6 413.9L1162.6 414.9L1162.6 415.9L1162.6 416.9L1162.6 417.9L1162.6 418.9L1162.6 419.9L1162.6 420.9L1162.6 421.9L1162.6 422.9L1162.6 423.9L1162.6 424.9L1162.6 425.9L1162.6 426.9L1162.6 427.9L1162.6 428.9L1162.6 429.9L1162.6 430.9L1162.6 431.9L1162.6 432.9L1162.6 433.9L1162.6 434.9L1162.6 435.9L1162.6 436.9L1162.6 437.9L1162.6 438.9L1162.6 439.9L1162.6 440.9L1162.6 441.9L1162.6 442.9L1162.6 443.9L1162.6 444.9L1162.6 445.9L1162.6 446.9L1162.6 447.9L1162.6 448.9L1162.6 449.9L1162.6 450.9L1162.6 451.9L1162.6 452.9L1162.6 453.9L1162.6 454.9L1162.6 456.0L1162.6 457.0L1162.6 458.0L1162.6 459.0L1162.6 460.0L1162.6 461.0L1162.6 462.0L1162.6 463.0L1162.6 464.0L1162.6 465.0L1162.6 466.0L1162.6 467.0L1162.6 468.0L1162.6 469.0L1162.6 470.0L1162.6 471.0L1162.6 472.0L1162.6 473.0L1162.6 474.0L1162.6 475.0L1162.6 476.0L1162.6 477.0L1162.6 478.0L1162.6 479.0L1162.6 480.0L1162.6 481.0L1162.6 482.0L1162.6 483.0L1162.6 484.0L1162.6 485.0L1162.6 486.0L1162.6 487.0L1162.6 488.0L1162.6 489.0L1162.6 490.0L1162.6 491.0L1162.6 492.0L1162.6 493.0L1162.5 494.0L1162.5 495.0L1162.5 496.0L1162.5 497.0L1162.5 498.0L1162.5 499.0L1162.5 500.0L1162.5 501.0L1162.5 502.0L1162.5 503.0L1162.5 504.0L1162.5 505.0L1162.5 506.0L1162.5 507.0L1162.5 508.0L1162.5 509.0L1162.5 510.0L1162.5 511.0L1162.5 512.0L1162.5 513.0L1162.5 514.0L1162.5 515.0L1162.5 516.0L1162.5 517.0L1162.5 518.0L1162.5 519.0L1162.5 520.0L1162.5 521.0L1162.5 522.0L1162.5 523.1L1162.5 524.1L1162.5 525.1L1162.5 526.1L1162.5 527.1L1162.5 528.1L1162.5 529.1L1162.5 530.1L1162.5 531.1L1162.5 532.1L1162.5 533.1L1162.5 534.1L1162.5 535.1L1162.5 536.1L1162.5 537.1L1162.5 538.1L1162.5 539.1L1162.5 540.1L1162.4 541.1L1162.4 542.1L1162.4 543.1L1162.4 544.1L1162.4 545.1L1162.4 546.1L1162.4 547.1L1162.4 548.1L1162.4 549.1L1162.4 550.1L1162.4 551.1L1162.4 552.1L1162.4 553.1L1162.4 554.1L1162.4 555.1L1162.4 556.1L1162.4 557.1L1162.4 558.1L1162.4 559.1L1162.4 560.1L1162.4 561.1L1162.4 562.1L1162.4 563.1L1162.4 564.1L1162.4 565.1L1162.4 566.1L1162.4 567.1L1162.3 568.1L1162.3 569.1L1162.3 570.1L1162.3 571.1L1162.3 572.1L1162.3 573.1L1162.3 574.1L1162.3 575.1L1162.3 576.1L1162.3 577.1L1162.3 578.1L1162.3 579.1L1162.3 580.1L1162.3 581.1L1162.3 582.1L1162.3 583.1L1162.3 584.1L1162.3 585.1L1162.3 586.1L1162.2 587.1L1162.2 588.1L1162.2 589.2L1162.2 590.2L1162.2 591.2L1162.2 592.2L1162.2 593.2L1162.2 594.2L1162.2 595.2L1162.2 596.2L1162.2 597.2L1162.2 598.2L1162.2 599.2L1162.2 600.2L1162.1 601.2L1162.1 602.2L1162.1 603.2L1162.1 604.2L1162.1 605.2L1162.1 606.2L1162.1 607.2L1162.1 608.2L1162.1 609.2L1162.1 610.2L1162.1 611.2L1162.0 612.2L1162.0 613.2L1162.0 614.2L1162.0 615.2L1162.0 616.2L1162.0 617.2L1162.0 618.2L1162.0 619.2L1162.0 620.2L1162.0 621.2L1161.9 622.2L1161.9 623.2L1161.9 624.2L1161.9 625.2L1161.9 626.2L1161.9 627.2L1161.9 628.2L1161.8 629.2L1161.8 630.2L1161.8 631.2L1161.8 632.2L1161.8 633.2L1161.8 634.2L1161.7 635.2L1161.7 636.2L1161.7 637.2L1161.7 638.2L1161.7 639.2L1161.6 640.2L1161.6 641.2L1161.6 642.2L1161.6 643.2L1161.6 644.2L1161.5 645.2L1161.5 646.2L1161.5 647.2L1161.5 648.2L1161.4 649.2L1161.4 650.2L1161.4 651.2L1161.3 652.2L1161.3 653.2L1161.3 654.2L1161.2 655.2L1161.2 656.3L1161.2 657.3L1161.1 658.3L1161.1 659.3L1161.0 660.3L1161.0 661.3L1160.9 662.3L1160.9 663.3L1160.8 664.3L1160.8 665.3L1160.7 666.3L1160.6 667.3L1160.6 668.3L1160.5 669.3L1160.4 670.3L1160.3 671.3L1160.2 672.3L1160.1 673.3L1160.0 674.3L1159.8 675.3L1159.7 676.3L1159.6 677.3L1159.6 678.3L1159.6 679.3L1159.6 680.3L1159.6 681.3L1159.6 682.3L1159.6 683.3L1159.6 684.3L1159.6 685.3L1159.6 686.3L1159.6 687.3L1159.6 688.3L1159.6 689.3L1164.8 689.3Z" fill="#d8d81c"/><path d="M1146.500 154.5H1165M1146.500 689.3H1165" stroke="#a0a010" stroke-width="1"/><path d="M1165 154.5V689.3" stroke="#6a6a0a" stroke-width="1"/></svg>
<div class="t" style="left:15px;top:154px;color:#e2e228;">1</div>
<div class="t" style="left:15px;top:206px;color:#e2e228;">0.8</div>
<div class="t" style="left:15px;top:258px;color:#e2e228;">0.6</div>
<div class="t" style="left:15px;top:311px;color:#e2e228;">0.4</div>
<div class="t" style="left:15px;top:363px;color:#e2e228;">0.2</div>
<div class="t" style="left:15px;top:415px;color:#e2e228;">0</div>
<div class="t" style="left:15px;top:467px;color:#e2e228;">-0.2</div>
<div class="t" style="left:15px;top:519px;color:#e2e228;">-0.4</div>
<div class="t" style="left:15px;top:572px;color:#e2e228;">-0.6</div>
<div class="t" style="left:15px;top:624px;color:#e2e228;">-0.8</div>
<div class="t" style="left:15px;top:676px;color:#e2e228;">-1</div>
<div class="t" style="left:31px;top:138px;color:#e2e228;">V</div>
<div class="a" style="left:54px;top:134px;width:78px;height:20px;background:#f2f2f2;border:2px solid #e81515;"></div>
<div class="t" style="left:54px;top:138px;width:78px;font-weight:bold;font-size:12px;text-align:center;">Done</div>
<div class="t" style="left:136px;top:138px;color:#eaea28;font-weight:bold;">C1</div>
<div class="a" style="left:154px;top:135px;width:24px;height:19px;border:1px solid #22b8c0;"></div>
<div class="t" style="left:159px;top:138px;color:#30d0d8;font-weight:bold;">C2</div>
<div class="t" style="left:180px;top:138px;color:#fff;letter-spacing:-0.136px;">8192 samples at 160 kHz | 2018-06-25 12:37:25.257</div>
<div class="t" style="left:44.5px;top:694px;color:#f4f4f4;letter-spacing:-0.521px;">-25 ms</div>
<div class="t" style="left:152.6px;top:694px;color:#f4f4f4;letter-spacing:-0.521px;">-20 ms</div>
<div class="t" style="left:260.7px;top:694px;color:#f4f4f4;letter-spacing:-0.521px;">-15 ms</div>
<div class="t" style="left:368.8px;top:694px;color:#f4f4f4;letter-spacing:-0.521px;">-10 ms</div>
<div class="t" style="left:476.9px;top:694px;color:#f4f4f4;letter-spacing:-0.600px;">-5 ms</div>
<div class="t" style="left:585.0px;top:694px;color:#f4f4f4;letter-spacing:-0.461px;">0 ms</div>
<div class="t" style="left:693.1px;top:694px;color:#f4f4f4;letter-spacing:-0.836px;">5 ms</div>
<div class="t" style="left:801.2px;top:694px;color:#f4f4f4;letter-spacing:-0.694px;">10 ms</div>
<div class="t" style="left:909.3px;top:694px;color:#f4f4f4;letter-spacing:-0.694px;">15 ms</div>
<div class="t" style="left:1017.4px;top:694px;color:#f4f4f4;letter-spacing:-0.694px;">20 ms</div>
<div class="t" style="left:1125.5px;top:694px;color:#f4f4f4;letter-spacing:-0.694px;">25 ms</div>
<div class="a" style="left:15px;top:691px;width:28px;height:18px;background:#ececec;border:1px solid #fafafa;"></div>
<div class="t" style="left:19px;top:693px;font-weight:bold;font-size:12px;">X</div>
<div class="a" style="left:199px;top:691px;width:38px;height:18px;background:#ececec;"></div>
<div class="t" style="left:209px;top:693px;">1</div>
<div class="a" style="left:328px;top:691px;width:37px;height:18px;background:#cfe4fa;border:1px solid #7db4ee;"></div>
<div class="t" style="left:331px;top:694px;font-size:10.500px;">2Δ1</div>
<div class="a" style="left:565px;top:292px;width:71px;height:15px;background:#000;"></div>
<div class="t" style="left:567px;top:293px;color:#f4f4f4;letter-spacing:-0.191px;">X1: -1.621 ms</div>
<div class="a" style="left:781px;top:291px;width:67px;height:15px;background:#000;"></div>
<div class="t" style="left:783px;top:292px;color:#f4f4f4;letter-spacing:-0.194px;">X2: 8.243 ms</div>
<div class="a" style="left:781px;top:305px;width:59px;height:15px;background:#000;"></div>
<div class="t" style="left:783px;top:306px;color:#f4f4f4;letter-spacing:-0.459px;">C2: 839 mV</div>
<div class="a" style="left:876px;top:291px;width:68px;height:15px;background:#000;"></div>
<div class="t" style="left:878px;top:292px;color:#f4f4f4;letter-spacing:-0.254px;">ΔX: 9.864 ms</div>
<div class="a" style="left:876px;top:305px;width:61px;height:15px;background:#000;"></div>
<div class="t" style="left:878px;top:306px;color:#f4f4f4;letter-spacing:-0.236px;">Δ: -2.37 mV</div>
<div class="a" style="left:971px;top:291px;width:123px;height:15px;background:#000;"></div>
<div class="t" style="left:973px;top:292px;color:#f4f4f4;letter-spacing:-0.202px;">1/ΔX: 101.369863014 Hz</div>
<div class="a" style="left:970px;top:305px;width:92px;height:15px;background:#000;"></div>
<div class="t" style="left:972px;top:306px;color:#f4f4f4;letter-spacing:-0.207px;">Δ/ΔX: -240.2 mV/s</div>
<div class="a" style="left:781px;top:633px;width:73px;height:15px;background:#000;"></div>
<div class="t" style="left:783px;top:634px;color:#f4f4f4;letter-spacing:-0.225px;">C1: -894.9 mV</div>
<div class="a" style="left:876px;top:633px;width:67px;height:15px;background:#000;"></div>
<div class="t" style="left:878px;top:634px;color:#f4f4f4;letter-spacing:-0.185px;">Δ: -41.67 mV</div>
<div class="a" style="left:970px;top:633px;width:101px;height:15px;background:#000;"></div>
<div class="t" style="left:972px;top:634px;color:#f4f4f4;letter-spacing:-0.204px;">Δ/ΔX: -4.223 mV/ms</div>
<div class="a" style="left:1124px;top:136px;width:21px;height:17px;background:#e2e2e2;"></div>
<div class="a" style="left:1147px;top:135px;width:19px;height:19px;background:#ebebeb;"></div>
<div class="t" style="left:1147px;top:138px;width:19px;font-weight:bold;font-size:12px;text-align:center;">Y</div>
<div class="a" style="left:1169px;top:135px;width:231px;height:21px;background:#dadada;border:1px solid #d0d0d0;"></div>
<div class="t" style="left:1174px;top:139px;letter-spacing:-0.314px;">Measurements</div>
<div class="t" style="left:1197px;top:163px;letter-spacing:-0.359px;">Add</div>
<div class="t" style="left:1282.5px;top:163px;letter-spacing:-0.117px;">Edit</div>
<div class="t" style="left:1333px;top:163px;letter-spacing:-0.633px;">Show</div>
<div class="a" style="left:1170px;top:182px;width:229px;height:527px;background:#fff;border:1px solid #b4b4b4;"></div>
<div class="a" style="left:1178px;top:227px;width:205px;height:1px;background:#e2e2e2;"></div>
<div class="a" style="left:1178px;top:250px;width:205px;height:1px;background:#e2e2e2;"></div>
<div class="a" style="left:1178px;top:272px;width:205px;height:1px;background:#e2e2e2;"></div>
<div class="a" style="left:1178px;top:295px;width:205px;height:1px;background:#e2e2e2;"></div>
<div class="a" style="left:1178px;top:184px;width:1px;height:111px;background:#e6e6e6;"></div>
<div class="a" style="left:1215px;top:184px;width:1px;height:111px;background:#e6e6e6;"></div>
<div class="a" style="left:1277px;top:184px;width:1px;height:111px;background:#e6e6e6;"></div>
<div class="a" style="left:1382px;top:184px;width:1px;height:111px;background:#e6e6e6;"></div>
<div class="t" style="left:1216px;top:187.5px;width:62px;text-align:center;letter-spacing:0.414px;">Name</div>
<div class="t" style="left:1278px;top:187.5px;width:105px;text-align:center;letter-spacing:0.134px;">Value</div>
<div class="t" style="left:1181px;top:210px;letter-spacing:-0.531px;">C1</div>
<div class="t" style="left:1219.5px;top:210px;letter-spacing:0.675px;">Amplitude</div>
<div class="t" style="left:1281.5px;top:210px;letter-spacing:-0.045px;">999.512914118 mV</div>
<div class="t" style="left:1181px;top:232px;letter-spacing:-0.531px;">C1</div>
<div class="t" style="left:1219.5px;top:232px;letter-spacing:-0.047px;">AC RMS</div>
<div class="t" style="left:1281.5px;top:232px;letter-spacing:-0.096px;">707.045926888 mV</div>
<div class="t" style="left:1181px;top:255px;letter-spacing:-0.531px;">C2</div>
<div class="t" style="left:1219.5px;top:255px;letter-spacing:0.675px;">Amplitude</div>
<div class="t" style="left:1281.5px;top:255px;letter-spacing:-0.096px;">840.076688519 mV</div>
<div class="t" style="left:1181px;top:277.5px;letter-spacing:-0.531px;">C2</div>
<div class="t" style="left:1219.5px;top:277.5px;letter-spacing:-0.047px;">AC RMS</div>
<div class="t" style="left:1281.5px;top:277.5px;letter-spacing:-0.096px;">594.420691567 mV</div>
<div class="a" style="left:1383px;top:183px;width:15px;height:525px;background:#f8f8f8;"></div>
<div class="a" style="left:1404px;top:153px;width:157px;height:88px;background:#f0f0f0;border:3px solid #fff;"></div>
<div class="t" style="left:1425px;top:159px;letter-spacing:-0.762px;">Time</div>
<div class="a" style="left:1535px;top:158px;width:21px;height:15px;background:#dcdcdc;border:1px solid #c8c8c8;"></div>
<div class="t" style="left:1410px;top:177.5px;letter-spacing:-0.189px;">Position:</div>
<div class="edit" style="left:1469px;top:175px;width:87px;height:19px;"></div>
<div class="t" style="left:1474px;top:178px;letter-spacing:-0.062px;">0 s</div>
<div class="t" style="left:1410px;top:198px;letter-spacing:-0.328px;">Base:</div>
<div class="edit" style="left:1469px;top:196px;width:87px;height:19px;"></div>
<div class="t" style="left:1474px;top:199px;letter-spacing:-0.246px;">5 ms/div</div>
<div class="a" style="left:1408px;top:216px;width:149px;height:21px;background:#bfdbf5;"></div>
<div class="a" style="left:1404px;top:244px;width:156px;height:22px;background:#e1e1e1;border:1px solid #c4c4c4;"></div>
<div class="t" style="left:1461.5px;top:249px;letter-spacing:-0.328px;">Add Channel</div>
<div class="a" style="left:1404px;top:268px;width:157px;height:66px;background:#f0f0f0;border:3px solid #ffff0a;"></div>
<div class="t" style="left:1425px;top:274px;letter-spacing:-0.295px;">Channel 1</div>
<div class="a" style="left:1535px;top:273px;width:21px;height:15px;background:#dcdcdc;border:1px solid #c8c8c8;"></div>
<div class="t" style="left:1410px;top:292.5px;letter-spacing:0.257px;">Offset:</div>
<div class="edit" style="left:1469px;top:290px;width:87px;height:19px;"></div>
<div class="t" style="left:1474px;top:293px;letter-spacing:-0.505px;">0 V</div>
<div class="t" style="left:1410px;top:313px;letter-spacing:-0.247px;">Range:</div>
<div class="edit" style="left:1469px;top:311px;width:87px;height:19px;"></div>
<div class="t" style="left:1474px;top:314px;letter-spacing:-0.353px;">200 mV/div</div>
<div class="a" style="left:1404px;top:336px;width:157px;height:66px;background:#f0f0f0;border:3px solid #1ee6f0;"></div>
<div class="t" style="left:1425px;top:342px;letter-spacing:-0.295px;">Channel 2</div>
<div class="a" style="left:1535px;top:341px;width:21px;height:15px;background:#dcdcdc;border:1px solid #c8c8c8;"></div>
<div class="t" style="left:1410px;top:360.5px;letter-spacing:0.257px;">Offset:</div>
<div class="edit" style="left:1469px;top:358px;width:87px;height:19px;"></div>
<div class="t" style="left:1474px;top:361px;letter-spacing:-0.505px;">0 V</div>
<div class="t" style="left:1410px;top:381px;letter-spacing:-0.247px;">Range:</div>
<div class="edit" style="left:1469px;top:379px;width:87px;height:19px;"></div>
<div class="t" style="left:1474px;top:382px;letter-spacing:-0.353px;">500 mV/div</div>
<div class="a" style="left:1563px;top:155px;width:20px;height:676px;background:#f5f5f5;"></div>
<div class="a" style="left:1400px;top:135px;width:1px;height:696px;background:#dcdcdc;"></div>
<div class="a" style="left:1583px;top:84px;width:1px;height:750px;background:#e4e4e4;"></div>
<div class="a" style="left:14px;top:715px;width:1386px;height:19px;background:#dadada;border:1px solid #d0d0d0;"></div>
<div class="t" style="left:18.5px;top:718.5px;letter-spacing:-0.378px;">X Cursors</div>
<div class="t" style="left:41px;top:742px;letter-spacing:-0.409px;">Normal</div>
<div class="t" style="left:106px;top:742px;letter-spacing:-0.237px;">Delta</div>
<div class="t" style="left:163px;top:742px;letter-spacing:-0.264px;">Remove All</div>
<div class="a" style="left:225px;top:739px;width:1px;height:20px;background:#d4d4d4;"></div>
<div class="t" style="left:253.5px;top:742px;letter-spacing:-0.633px;">Show</div>
<div class="a" style="left:14px;top:761px;width:1386px;height:70px;background:#fff;border:1px solid #b0b0b0;"></div>
<div class="a" style="left:1183px;top:733px;width:170px;height:17px;background:#edf3fa;"></div>
<div class="t" style="left:1215px;top:735px;color:#e2ebf6;letter-spacing:0.345px;">Window Snip</div>
<div class="a" style="left:29px;top:762px;width:1px;height:64px;background:#e0e0e0;"></div>
<div class="a" style="left:169px;top:762px;width:1px;height:64px;background:#e0e0e0;"></div>
<div class="a" style="left:219px;top:762px;width:1px;height:64px;background:#e0e0e0;"></div>
<div class="a" style="left:360px;top:762px;width:1px;height:64px;background:#e0e0e0;"></div>
<div class="a" style="left:500px;top:762px;width:1px;height:64px;background:#e0e0e0;"></div>
<div class="a" style="left:641px;top:762px;width:1px;height:64px;background:#e0e0e0;"></div>
<div class="a" style="left:782px;top:762px;width:1px;height:64px;background:#e0e0e0;"></div>
<div class="a" style="left:923px;top:762px;width:1px;height:64px;background:#e0e0e0;"></div>
<div class="a" style="left:1063px;top:762px;width:1px;height:64px;background:#e0e0e0;"></div>
<div class="a" style="left:1203px;top:762px;width:1px;height:64px;background:#e0e0e0;"></div>
<div class="a" style="left:1343px;top:762px;width:1px;height:64px;background:#e0e0e0;"></div>
<div class="a" style="left:15px;top:803px;width:1366px;height:1px;background:#dcdcdc;"></div>
<div class="a" style="left:15px;top:824px;width:1366px;height:1px;background:#dcdcdc;"></div>
<div class="a" style="left:15px;top:826px;width:15px;height:4px;background:#f0f0f0;"></div>
<div class="t" style="left:30px;top:767px;width:139px;text-align:center;letter-spacing:-0.268px;">Position</div>
<div class="t" style="left:170px;top:767px;width:49px;text-align:center;letter-spacing:0.125px;">Ref</div>
<div class="t" style="left:220px;top:767px;width:140px;text-align:center;letter-spacing:-0.380px;">Δ X</div>
<div class="t" style="left:361px;top:767px;width:139px;text-align:center;letter-spacing:-0.465px;">1/ΔX</div>
<div class="t" style="left:501px;top:767px;width:140px;text-align:center;letter-spacing:-0.531px;">C1</div>
<div class="t" style="left:642px;top:767px;width:140px;text-align:center;letter-spacing:-0.463px;">C1 ΔY</div>
<div class="t" style="left:783px;top:767px;width:140px;text-align:center;letter-spacing:-0.568px;">C1 ΔY/ΔX</div>
<div class="t" style="left:924px;top:767px;width:139px;text-align:center;letter-spacing:-0.531px;">C2</div>
<div class="t" style="left:1064px;top:767px;width:139px;text-align:center;letter-spacing:-0.662px;">C2 ΔY</div>
<div class="t" style="left:1204px;top:767px;width:139px;text-align:center;letter-spacing:-0.568px;">C2 ΔY/ΔX</div>
<div class="t" style="left:20px;top:788px;">1</div>
<div class="t" style="left:19.5px;top:809px;">2</div>
<div class="edit" style="left:30px;top:784px;width:140px;height:20px;"></div>
<div class="t" style="left:35px;top:788px;letter-spacing:-0.214px;">-17.47 ms</div>
<div class="edit" style="left:30px;top:805px;width:140px;height:20px;"></div>
<div class="t" style="left:35px;top:809px;letter-spacing:-0.122px;">-11.573 ms</div>
<div class="cmb" style="left:171px;top:784px;width:49px;height:20px;"></div>
<div class="t" style="left:174px;top:788px;letter-spacing:-0.121px;">none</div>
<div class="cmb" style="left:171px;top:805px;width:49px;height:20px;"></div>
<div class="t" style="left:175px;top:809px;">1</div>
<div class="a" style="left:221px;top:784px;width:140px;height:20px;background:#f8f8f8;border:1px solid #dcdcdc;"></div>
<div class="a" style="left:224px;top:788px;width:118px;height:13px;background:#ececec;"></div>
<div class="edit" style="left:221px;top:805px;width:140px;height:20px;"></div>
<div class="t" style="left:226px;top:809px;letter-spacing:-0.319px;">5.8976 ms</div>
<div class="t" style="left:365px;top:808px;letter-spacing:-0.066px;">169.5 Hz</div>
<div class="t" style="left:505px;top:787px;letter-spacing:-0.193px;">0.9959 V</div>
<div class="t" style="left:505px;top:808px;letter-spacing:-0.023px;">-0.8365 V</div>
<div class="t" style="left:646px;top:808px;letter-spacing:-0.074px;">-1.832 V</div>
<div class="t" style="left:787px;top:808px;letter-spacing:0.086px;">-310.7 V/s</div>
<div class="t" style="left:928px;top:787px;letter-spacing:-0.134px;">-0.7257 V</div>
<div class="t" style="left:928px;top:808px;letter-spacing:-0.256px;">0.8410 V</div>
<div class="t" style="left:1068.5px;top:808px;letter-spacing:-0.346px;">1.566 V</div>
<div class="t" style="left:1207.5px;top:808px;letter-spacing:0.002px;">265.6 V/s</div>
<div class="a" style="left:1381px;top:762px;width:18px;height:68px;background:#f8f8f8;"></div>
<div class="a" style="left:13px;top:834px;width:1570px;height:1px;background:#dcdcdc;"></div>
<div class="btn" style="left:15px;top:839px;width:81px;height:17px;"></div>
<div class="t" style="left:19.5px;top:841px;letter-spacing:-0.277px;">Manual Trigger</div>
<div class="btn" style="left:1316px;top:839px;width:156px;height:17px;"></div>
<div class="t" style="left:1321px;top:841px;letter-spacing:-0.228px;">Discovery2 SN:210321A80768</div>
<div class="btn" style="left:1479px;top:839px;width:77px;height:17px;"></div>
<div class="t" style="left:1491.5px;top:841px;letter-spacing:-0.170px;">Status: OK</div>
<div class="btn" style="left:1564px;top:839px;width:21px;height:17px;"></div>
<svg width="1600" height="880" viewBox="0 0 1600 880"><path d="M30.500 693v14" stroke="#c4c4c4"/><path d="M33.0 698.5L40.0 698.5L36.5 702.5Z" fill="#000"/><path d="M223.500 693v14" stroke="#c4c4c4"/><path d="M226.5 698.5L233.5 698.5L230 702.5Z" fill="#000"/><path d="M352.500 693v14" stroke="#9cc4ee"/><path d="M355.0 698.5L362.0 698.5L358.5 702.5Z" fill="#000"/><circle cx="1052.500" cy="142" r="5.200" fill="#2d62b8" stroke="#dfe6f2" stroke-width="1.800"/><path d="M1056.500 146.500l4.500 4.500" stroke="#c8d0dc" stroke-width="2.200"/><path d="M1052.500 139.500v5" stroke="#dfe8f8" stroke-width="1.400"/><path d="M1069 137l1 7l2-2l3 3l1.500-1.500l-3-3l2-2z" fill="#2f7ad8"/><rect x="1068" y="146" width="12" height="3.500" fill="#9a9a9a"/><rect x="1085.500" y="136" width="17" height="17" fill="#d4e9fc" stroke="#9fc8f0" stroke-width="0.800"/><path d="M1088.500 138v8M1088.500 140.500h11" stroke="#2f7ad8" stroke-width="1.400"/><rect x="1088" y="147.500" width="12" height="2.500" fill="#b8c4d0"/><path d="M1108.500 137v9M1108.500 138.500h12M1108.500 142h8" stroke="#2f7ad8" stroke-width="1.500"/><rect x="1108" y="146" width="12" height="3.500" fill="#9a9a9a"/><circle cx="1134" cy="144" r="4.6" fill="#d9dde0" stroke="#b3b9be" stroke-width="1.8" stroke-dasharray="2 1.2"/><circle cx="1136.6" cy="146.6" r="2.6" fill="#e4e7ea" stroke="#bcc2c7" stroke-width="1"/><path d="M1131.8 141.4q-1.6 3.2 2.6 5.6" fill="none" stroke="#5a636b" stroke-width="1.7" stroke-linecap="round"/><path d="M1135.6 147.4q1.6 0.6 2.600-0.8" fill="none" stroke="#6c747b" stroke-width="1.2" stroke-linecap="round"/><path d="M1374.5 141.5h5v5h-2" fill="none" stroke="#111" stroke-width="1"/><rect x="1372.5" y="144.5" width="5" height="5" fill="none" stroke="#111" stroke-width="1"/><path d="M1372 144.7h6" stroke="#111" stroke-width="1.5"/><path d="M1387.5 141.5l7.500 7.500M1395 141.5l-7.500 7.500" stroke="#111" stroke-width="1.5"/><path d="M1183.0 161.5h4v5.0h5.0v4h-5.0v5.0h-4v-5.0h-5.0v-4h5.0z" fill="#63c63e" stroke="#48a62c" stroke-width="0.9" stroke-linejoin="round"/><path d="M1183.6 162.3h2.4v5.0M1178.8 167.3h5.0" fill="none" stroke="#a8e88c" stroke-width="1" opacity="0.8"/><path d="M1217.0 172.5L1222.0 172.5L1219.5 175.5Z" fill="#000"/><rect x="1232.0" y="166.5" width="14" height="4" rx="1.6" fill="#c42f3a" stroke="#a82530" stroke-width="0.5"/><rect x="1233.0" y="166.9" width="11.5" height="1.2" rx="0.6" fill="#ee8a92"/><path d="M1249.0 172.5L1254.0 172.5L1251.5 175.5Z" fill="#000"/><path d="M1266 161.500h8l3.500 3.500v11h-11.500z" fill="#f4f4f4" stroke="#c4c4c4"/><path d="M1267.500 163l9 11.500" stroke="#dcc468" stroke-width="1.600"/><rect x="1314" y="162" width="14" height="13" fill="#f7f7f7" stroke="#d0d0d0" stroke-width="0.6"/><rect x="1314" y="162" width="14" height="2.5" fill="#dcdcdc"/><rect x="1315.5" y="167" width="2" height="2" fill="#3f7fd0"/><rect x="1315.5" y="171" width="2" height="2" fill="#3f7fd0"/><path d="M1319 168h8M1319 172h8" stroke="#e0e0e0" stroke-width="1"/><path d="M1360.0 172.5L1365.0 172.5L1362.5 175.5Z" fill="#000"/><path d="M1386.500 193.500l4-4l4 4" fill="none" stroke="#c0c0c0" stroke-width="1.300"/><path d="M1386.500 698.500l4 4l4-4" fill="none" stroke="#c0c0c0" stroke-width="1.300"/><path d="M1405 143.500h6v-2l4.500 3.200l-4.500 3.200v-2h-6z" fill="#8fd65e" stroke="#6cc045" stroke-width="0.600"/><rect x="1408.0" y="159.5" width="12" height="12" fill="#fff" stroke="#333"/><path d="M1410.5 165.5l2.7 3l5-6.2" fill="none" stroke="#222" stroke-width="1.3"/><circle cx="1545.5" cy="165.5" r="4.6" fill="#d9dde0" stroke="#b3b9be" stroke-width="1.8" stroke-dasharray="2 1.2"/><circle cx="1548.1" cy="168.1" r="2.6" fill="#e4e7ea" stroke="#bcc2c7" stroke-width="1"/><path d="M1543.3 162.9q-1.6 3.2 2.6 5.6" fill="none" stroke="#5a636b" stroke-width="1.7" stroke-linecap="round"/><path d="M1547.1 168.9q1.6 0.6 2.600-0.8" fill="none" stroke="#6c747b" stroke-width="1.2" stroke-linecap="round"/><path d="M1542.5 182.5L1546.5 186.5L1550.5 182.5" fill="none" stroke="#5c5c5c" stroke-width="1.1"/><path d="M1542.5 203.5L1546.5 207.5L1550.5 203.5" fill="none" stroke="#5c5c5c" stroke-width="1.1"/><path d="M1481.5 221.0h3v8h2.2l-3.7 5l-3.7-5h2.2z" fill="#7fd04a" stroke="#3e8f25" stroke-width="0.9" stroke-linejoin="round"/><path d="M1447.75 249.0h3.5v4.75h4.75v3.5h-4.75v4.75h-3.5v-4.75h-4.75v-3.5h4.75z" fill="#63c63e" stroke="#48a62c" stroke-width="0.9" stroke-linejoin="round"/><path d="M1448.35 249.8h1.9v4.75M1443.8 254.55h4.75" fill="none" stroke="#a8e88c" stroke-width="1" opacity="0.8"/><path d="M1547.0 253.5L1554.0 253.5L1550.5 257.5Z" fill="#000"/><rect x="1408.0" y="274.5" width="12" height="12" fill="#fff" stroke="#333"/><path d="M1410.5 280.5l2.7 3l5-6.2" fill="none" stroke="#222" stroke-width="1.3"/><circle cx="1545.5" cy="280.5" r="4.6" fill="#d9dde0" stroke="#b3b9be" stroke-width="1.8" stroke-dasharray="2 1.2"/><circle cx="1548.1" cy="283.1" r="2.6" fill="#e4e7ea" stroke="#bcc2c7" stroke-width="1"/><path d="M1543.3 277.9q-1.6 3.2 2.6 5.6" fill="none" stroke="#5a636b" stroke-width="1.7" stroke-linecap="round"/><path d="M1547.1 283.9q1.6 0.6 2.600-0.8" fill="none" stroke="#6c747b" stroke-width="1.2" stroke-linecap="round"/><path d="M1542.5 297.5L1546.5 301.5L1550.5 297.5" fill="none" stroke="#5c5c5c" stroke-width="1.1"/><path d="M1542.5 318.5L1546.5 322.5L1550.5 318.5" fill="none" stroke="#5c5c5c" stroke-width="1.1"/><rect x="1408.0" y="342.5" width="12" height="12" fill="#fff" stroke="#333"/><path d="M1410.5 348.5l2.7 3l5-6.2" fill="none" stroke="#222" stroke-width="1.3"/><circle cx="1545.5" cy="348.5" r="4.6" fill="#d9dde0" stroke="#b3b9be" stroke-width="1.8" stroke-dasharray="2 1.2"/><circle cx="1548.1" cy="351.1" r="2.6" fill="#e4e7ea" stroke="#bcc2c7" stroke-width="1"/><path d="M1543.3 345.9q-1.6 3.2 2.6 5.6" fill="none" stroke="#5a636b" stroke-width="1.7" stroke-linecap="round"/><path d="M1547.1 351.9q1.6 0.6 2.600-0.8" fill="none" stroke="#6c747b" stroke-width="1.2" stroke-linecap="round"/><path d="M1542.5 365.5L1546.5 369.5L1550.5 365.5" fill="none" stroke="#5c5c5c" stroke-width="1.1"/><path d="M1542.5 386.5L1546.5 390.5L1550.5 386.5" fill="none" stroke="#5c5c5c" stroke-width="1.1"/><path d="M1567.500 164.500l4-4l4 4" fill="none" stroke="#c4c4c4" stroke-width="1.300"/><path d="M1567.500 819.500l4 4l4-4" fill="none" stroke="#c4c4c4" stroke-width="1.300"/><path d="M1374.5 720.5h5v5h-2" fill="none" stroke="#111" stroke-width="1"/><rect x="1372.5" y="723.5" width="5" height="5" fill="none" stroke="#111" stroke-width="1"/><path d="M1372 723.7h6" stroke="#111" stroke-width="1.5"/><path d="M1387.5 720.5l7.500 7.500M1395 720.5l-7.500 7.500" stroke="#111" stroke-width="1.5"/><path d="M28.0 741h4v5.0h5.0v4h-5.0v5.0h-4v-5.0h-5.0v-4h5.0z" fill="#63c63e" stroke="#48a62c" stroke-width="0.9" stroke-linejoin="round"/><path d="M28.6 741.8h2.4v5.0M23.8 746.8h5.0" fill="none" stroke="#a8e88c" stroke-width="1" opacity="0.8"/><path d="M93.0 741h4v5.0h5.0v4h-5.0v5.0h-4v-5.0h-5.0v-4h5.0z" fill="#63c63e" stroke="#48a62c" stroke-width="0.9" stroke-linejoin="round"/><path d="M93.6 741.8h2.4v5.0M88.8 746.8h5.0" fill="none" stroke="#a8e88c" stroke-width="1" opacity="0.8"/><rect x="145.0" y="746.0" width="14" height="4" rx="1.6" fill="#c42f3a" stroke="#a82530" stroke-width="0.5"/><rect x="146.0" y="746.4" width="11.5" height="1.2" rx="0.6" fill="#ee8a92"/><rect x="235" y="740" width="14" height="13" fill="#f7f7f7" stroke="#d0d0d0" stroke-width="0.6"/><rect x="235" y="740" width="14" height="2.5" fill="#dcdcdc"/><rect x="236.5" y="745" width="2" height="2" fill="#3f7fd0"/><rect x="236.5" y="749" width="2" height="2" fill="#3f7fd0"/><path d="M240 746h8M240 750h8" stroke="#e0e0e0" stroke-width="1"/><path d="M280.5 751.5L285.5 751.5L283 754.5Z" fill="#000"/><path d="M157 792.5L161 796.5L165 792.5" fill="none" stroke="#5c5c5c" stroke-width="1.1"/><path d="M157 813.5L161 817.5L165 813.5" fill="none" stroke="#5c5c5c" stroke-width="1.1"/><path d="M207.0 792.0L214.0 792.0L210.5 796.0Z" fill="#000"/><path d="M207.0 813.0L214.0 813.0L210.5 817.0Z" fill="#000"/><path d="M347.5 792.5L351.5 796.5L355.5 792.5" fill="none" stroke="#c8c8c8" stroke-width="1.1"/><path d="M347.5 813.5L351.5 817.5L355.5 813.5" fill="none" stroke="#5c5c5c" stroke-width="1.1"/><rect x="1356.0" y="792.25" width="14" height="3.5" rx="1.6" fill="#c42f3a" stroke="#a82530" stroke-width="0.5"/><rect x="1357.0" y="792.65" width="11.5" height="1.2" rx="0.6" fill="#ee8a92"/><rect x="1356.0" y="812.25" width="14" height="3.5" rx="1.6" fill="#c42f3a" stroke="#a82530" stroke-width="0.5"/><rect x="1357.0" y="812.65" width="11.5" height="1.2" rx="0.6" fill="#ee8a92"/><path d="M1386.500 772.500l4-4l4 4" fill="none" stroke="#c0c0c0" stroke-width="1.300"/><path d="M1386.500 819.500l4 4l4-4" fill="none" stroke="#c0c0c0" stroke-width="1.300"/><circle cx="1574" cy="847.5" r="4.6" fill="#d9dde0" stroke="#b3b9be" stroke-width="1.8" stroke-dasharray="2 1.2"/><circle cx="1576.6" cy="850.1" r="2.6" fill="#e4e7ea" stroke="#bcc2c7" stroke-width="1"/><path d="M1571.8 844.9q-1.6 3.2 2.6 5.6" fill="none" stroke="#5a636b" stroke-width="1.7" stroke-linecap="round"/><path d="M1575.6 850.9q1.6 0.6 2.600-0.8" fill="none" stroke="#6c747b" stroke-width="1.2" stroke-linecap="round"/></svg>
</body></html>
